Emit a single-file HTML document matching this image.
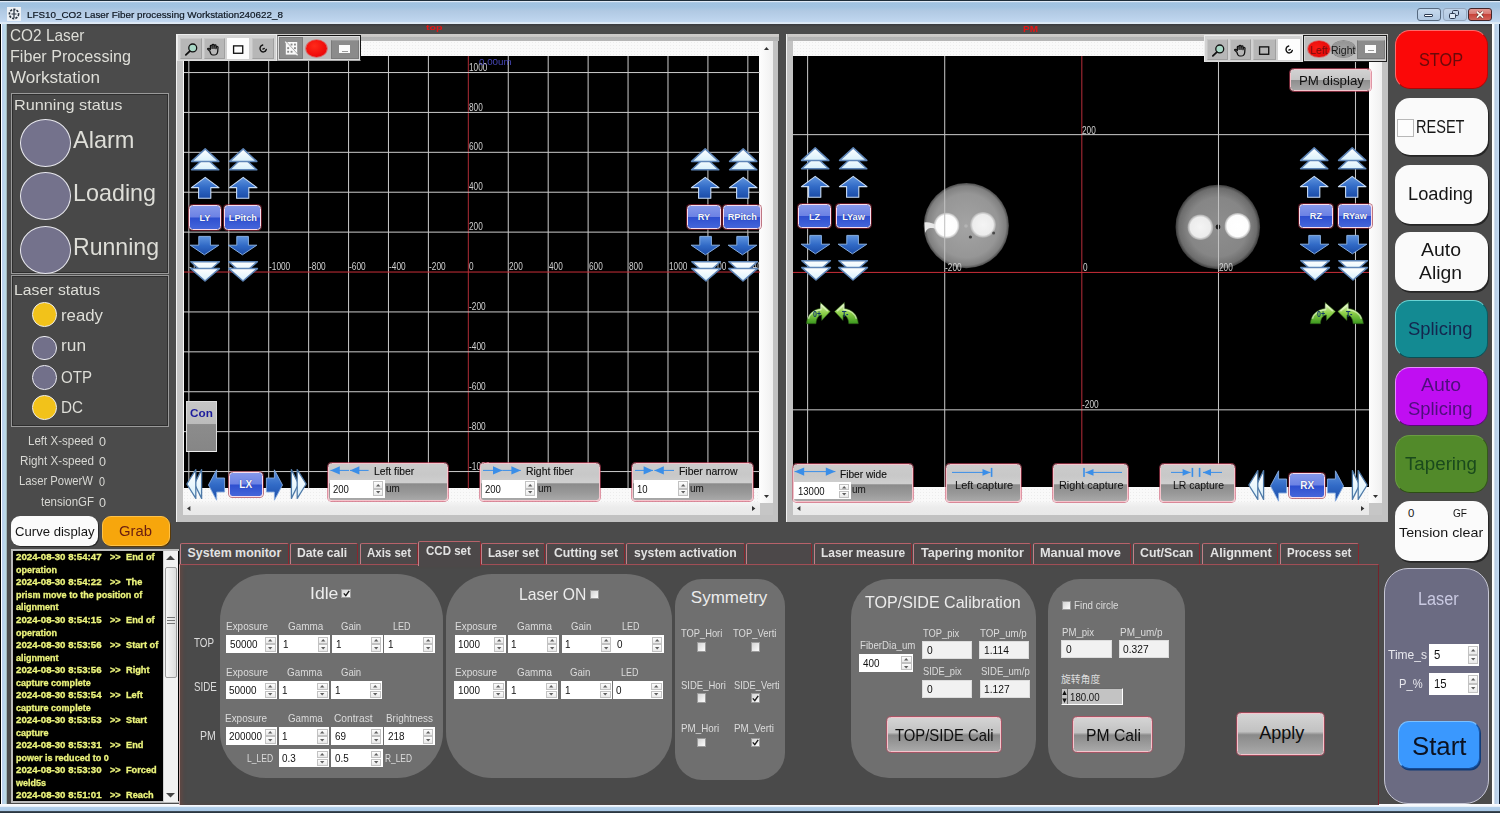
<!DOCTYPE html>
<html><head><meta charset="utf-8"><title>LFS10</title>
<style>
html,body{margin:0;padding:0;}
body{width:1500px;height:813px;overflow:hidden;position:relative;background:#4b4b4b;font-family:"Liberation Sans",sans-serif;}
.t{position:absolute;white-space:nowrap;line-height:1;}
.b{position:absolute;box-sizing:border-box;}
svg{position:absolute;overflow:visible;}

.tb{position:absolute;left:0;top:0;width:1500px;height:24px;background:linear-gradient(#dfeaf6 0,#dfeaf6 2px,#a0c2e0 2.6px,#a2c3e1 7px,#b1c9e3 11px,#bcd3ec 19px,#c3d8f0 21.6px,#dee9f5 22.6px,#e2ecf6 24px);}


.bb{position:absolute;box-sizing:border-box;border:1.5px solid #f9dcea;border-radius:3.5px;background:linear-gradient(#8598ea 0,#6c82e4 48%,#2e4fd0 52%,#4566da 100%);box-shadow:0 0 0 1px rgba(150,30,50,.6);}
.gb{position:absolute;box-sizing:border-box;border:1.2px solid #f6c4cc;border-radius:3.5px;box-shadow:0 0 0 0.9px rgba(200,70,95,.62);}
.inp{position:absolute;box-sizing:border-box;background:#fff;}
.sp{position:absolute;box-sizing:border-box;border:1px solid #c2c2c2;background:linear-gradient(#fdfdfd,#e9e9e9);}

</style></head><body>
<div class="tb"></div>
<div class="b" style="left:0.0px;top:0.0px;width:1500.0px;height:1.3px;background:#1d2c38;"></div>
<div class="b" style="left:0.0px;top:24.0px;width:7.2px;height:789.0px;background:linear-gradient(90deg,#000 0,#000 0.8px,#fff 1.1px,#fff 2.1px,#b9cfec 2.5px,#bcdbe7 5.4px,#a9c1c6 6.4px,#5a5e66 7.2px);"></div>
<div class="b" style="left:1491.7px;top:24.0px;width:8.3px;height:789.0px;background:linear-gradient(90deg,#4b4b4b 0,#fff 0.4px,#f6fbfd 2.2px,#b5c9e1 2.7px,#c3dbf3 6.6px,#0e1c30 7.4px,#0a1424 8.3px);"></div>
<div class="b" style="left:0.0px;top:804.4px;width:1500.0px;height:8.6px;background:linear-gradient(#fbfcfe 0,#f2f6fb 2.4px,#b4d0ea 3px,#a9c8e6 7px,#3e4c58 7.4px,#2a3640 8.6px);"></div>
<div class="b" style="left:7.0px;top:24.0px;width:1485.0px;height:3.0px;background:linear-gradient(#3a3a3e,#4b4b4b);"></div>
<svg style="left:7px;top:7px" width="14" height="14" viewBox="0 0 14 14"><rect x="0" y="0" width="14" height="14" fill="#eef2f6"/><circle cx="7" cy="7" r="4.6" fill="none" stroke="#2a3440" stroke-width="1.6" stroke-dasharray="2.2 1.2"/><path d="M7 3v8M4.5 7h5" stroke="#2a3440" stroke-width="1.2"/></svg>
<div class="t" style="left:27.0px;top:9.6px;font-size:9.8px;color:#0e1620;transform:scaleX(1.005);transform-origin:0 0;-webkit-text-stroke:0.2px #0e1620;">LFS10_CO2 Laser Fiber processing Workstation240622_8</div>
<div class="b" style="left:1416.5px;top:8.0px;width:24.0px;height:12.5px;border:1px solid #56697f;border-radius:3px;background:linear-gradient(#c7daee,#b0c8e2);"></div>
<div class="b" style="left:1424.0px;top:14.0px;width:9.2px;height:3.2px;border:1px solid #2d3b52;background:#fff;border-radius:1px;"></div>
<div class="b" style="left:1442.8px;top:8.0px;width:24.0px;height:12.5px;border:1px solid #93a6bd;border-radius:3px;background:linear-gradient(#c2d5ea,#b0c8e2);"></div>
<div class="b" style="left:1452.4px;top:10.2px;width:6.6px;height:5.4px;border:1.4px solid #2d3b52;border-radius:1.6px;background:#c6d8ec;"></div>
<div class="b" style="left:1449.2px;top:12.8px;width:6.6px;height:5.8px;border:1.4px solid #2d3b52;border-radius:1.6px;background:#dfeaf6;"></div>
<div class="b" style="left:1468.4px;top:8.0px;width:23.4px;height:12.5px;border:1px solid #43262b;border-radius:3px;background:linear-gradient(#e29a94 0,#d97871 45%,#c7433a 50%,#d2655b 100%);"></div>
<svg style="left:1476.2px;top:10.8px" width="8" height="7.4" viewBox="0 0 9 8" preserveAspectRatio="none"><path d="M1 0.8L8 7.2M8 0.8L1 7.2" stroke="#5a2a2a" stroke-width="3.2"/><path d="M1 0.8L8 7.2M8 0.8L1 7.2" stroke="#fff8ee" stroke-width="1.9"/></svg>
<div class="t" style="left:10.0px;top:27.3px;font-size:16.2px;color:#deded8;transform:scaleX(0.951);transform-origin:0 0;">CO2 Laser</div>
<div class="t" style="left:10.0px;top:48.1px;font-size:16.2px;color:#deded8;transform:scaleX(0.996);transform-origin:0 0;">Fiber Processing</div>
<div class="t" style="left:10.0px;top:69.1px;font-size:16.2px;color:#deded8;transform:scaleX(1.056);transform-origin:0 0;">Workstation</div>
<div class="b" style="left:11.0px;top:93.0px;width:158.0px;height:180.5px;border:1px solid #9a9a9a;background:#484848;box-shadow:inset 0 0 0 1px #2e2e2e;"></div>
<div class="t" style="left:14.0px;top:97.1px;font-size:15px;color:#deded8;transform:scaleX(1.084);transform-origin:0 0;">Running status</div>
<div class="b" style="left:19.7px;top:119.2px;width:51.0px;height:48.0px;border-radius:50%;background:#74728c;border:1.7px solid #e8e8ee;"></div>
<div class="t" style="left:72.5px;top:128.2px;font-size:24px;color:#deded8;transform:scaleX(0.981);transform-origin:0 0;">Alarm</div>
<div class="b" style="left:19.7px;top:172.0px;width:51.0px;height:48.0px;border-radius:50%;background:#74728c;border:1.7px solid #e8e8ee;"></div>
<div class="t" style="left:72.5px;top:181.4px;font-size:24px;color:#deded8;transform:scaleX(0.972);transform-origin:0 0;">Loading</div>
<div class="b" style="left:19.7px;top:226.0px;width:51.0px;height:48.0px;border-radius:50%;background:#74728c;border:1.7px solid #e8e8ee;"></div>
<div class="t" style="left:72.5px;top:234.7px;font-size:24px;color:#deded8;transform:scaleX(0.962);transform-origin:0 0;">Running</div>
<div class="b" style="left:11.0px;top:275.0px;width:158.0px;height:151.5px;border:1px solid #9a9a9a;background:#484848;box-shadow:inset 0 0 0 1px #2e2e2e;"></div>
<div class="t" style="left:14.0px;top:281.9px;font-size:15.5px;color:#deded8;transform:scaleX(1.019);transform-origin:0 0;">Laser status</div>
<div class="b" style="left:32.0px;top:302.4px;width:24.6px;height:24.6px;border-radius:50%;background:#f2c21a;border:1.9px solid #ececf0;"></div>
<div class="t" style="left:60.5px;top:306.5px;font-size:16.5px;color:#deded8;transform:scaleX(1.018);transform-origin:0 0;">ready</div>
<div class="b" style="left:32.0px;top:335.9px;width:24.6px;height:24.6px;border-radius:50%;background:#72708a;border:1.9px solid #ececf0;"></div>
<div class="t" style="left:60.5px;top:337.0px;font-size:16.5px;color:#deded8;transform:scaleX(1.048);transform-origin:0 0;">run</div>
<div class="b" style="left:32.0px;top:365.3px;width:24.6px;height:24.6px;border-radius:50%;background:#72708a;border:1.9px solid #ececf0;"></div>
<div class="t" style="left:60.5px;top:369.0px;font-size:16.5px;color:#deded8;transform:scaleX(0.914);transform-origin:0 0;">OTP</div>
<div class="b" style="left:32.0px;top:395.3px;width:24.6px;height:24.6px;border-radius:50%;background:#f2c21a;border:1.9px solid #ececf0;"></div>
<div class="t" style="left:60.5px;top:399.0px;font-size:16.5px;color:#deded8;transform:scaleX(0.923);transform-origin:0 0;">DC</div>
<div class="t" style="left:28.0px;top:434.5px;font-size:12px;color:#d8d8d4;transform:scaleX(0.963);transform-origin:0 0;">Left X-speed</div>
<div class="t" style="left:99.0px;top:435.6px;font-size:12.5px;color:#d8d8d4;transform:scaleX(1.007);transform-origin:0 0;">0</div>
<div class="t" style="left:19.5px;top:454.8px;font-size:12px;color:#d8d8d4;transform:scaleX(0.973);transform-origin:0 0;">Right X-speed</div>
<div class="t" style="left:99.0px;top:455.9px;font-size:12.5px;color:#d8d8d4;transform:scaleX(1.007);transform-origin:0 0;">0</div>
<div class="t" style="left:18.5px;top:475.3px;font-size:12px;color:#d8d8d4;transform:scaleX(0.940);transform-origin:0 0;">Laser PowerW</div>
<div class="t" style="left:99.0px;top:476.4px;font-size:12.5px;color:#d8d8d4;transform:scaleX(0.863);transform-origin:0 0;">0</div>
<div class="t" style="left:40.5px;top:495.5px;font-size:12px;color:#d8d8d4;transform:scaleX(0.957);transform-origin:0 0;">tensionGF</div>
<div class="t" style="left:99.0px;top:496.6px;font-size:12.5px;color:#d8d8d4;transform:scaleX(1.007);transform-origin:0 0;">0</div>
<div class="b" style="left:11.0px;top:516.0px;width:86.5px;height:29.5px;background:#fbfbfb;border-radius:9px;box-shadow:1px 1px 0 #2a2a2a;"></div>
<div class="t" style="left:15.0px;top:524.9px;font-size:13.5px;color:#141414;transform:scaleX(0.972);transform-origin:0 0;">Curve display</div>
<div class="b" style="left:102.0px;top:516.0px;width:67.5px;height:29.5px;background:#f7a60c;border-radius:9px;border:1px solid #ffc248;box-shadow:1px 1px 0 #5a3a08;"></div>
<div class="t" style="left:119.0px;top:522.7px;font-size:15.5px;color:#6a1e10;transform:scaleX(0.958);transform-origin:0 0;">Grab</div>
<div class="b" style="left:11.0px;top:549.0px;width:167.5px;height:253.5px;background:#000;border:2px solid #bcbcbc;border-right:0;"></div>
<div class="b" style="left:163.0px;top:550.5px;width:15.0px;height:251.5px;background:#f1f1f1;border-left:1px solid #d0d0d0;"></div>
<div class="b" style="left:164.5px;top:566.5px;width:12.5px;height:111.5px;background:linear-gradient(90deg,#f6f6f6,#dcdcdc);border:1px solid #9c9c9c;border-radius:2px;"></div>
<div class="b" style="left:167.0px;top:617.0px;width:7.5px;height:1.3px;background:#777;"></div>
<div class="b" style="left:167.0px;top:620.0px;width:7.5px;height:1.3px;background:#777;"></div>
<div class="b" style="left:167.0px;top:623.0px;width:7.5px;height:1.3px;background:#777;"></div>
<svg style="left:166px;top:555px" width="9" height="5"><path d="M0 5L4.5 0.5L9 5z" fill="#444"/></svg>
<svg style="left:166px;top:792.5px" width="9" height="5"><path d="M0 0L4.5 4.5L9 0z" fill="#444"/></svg>
<div class="t" style="left:16.0px;top:553.3px;font-size:9.3px;color:#ecf47c;font-weight:bold;transform:scaleX(1.041);transform-origin:0 0;-webkit-text-stroke:0.3px #ecf47c;">2024-08-30 8:54:47</div>
<div class="t" style="left:109.6px;top:553.3px;font-size:9.3px;color:#ecf47c;font-weight:bold;transform:scaleX(0.976);transform-origin:0 0;-webkit-text-stroke:0.3px #ecf47c;">&gt;&gt;</div>
<div class="t" style="left:126.4px;top:553.3px;font-size:9.3px;color:#ecf47c;font-weight:bold;transform:scaleX(0.990);transform-origin:0 0;-webkit-text-stroke:0.3px #ecf47c;">End of</div>
<div class="t" style="left:16.0px;top:565.9px;font-size:9.3px;color:#ecf47c;font-weight:bold;transform:scaleX(0.970);transform-origin:0 0;-webkit-text-stroke:0.3px #ecf47c;">operation</div>
<div class="t" style="left:16.0px;top:578.4px;font-size:9.3px;color:#ecf47c;font-weight:bold;transform:scaleX(1.041);transform-origin:0 0;-webkit-text-stroke:0.3px #ecf47c;">2024-08-30 8:54:22</div>
<div class="t" style="left:109.6px;top:578.4px;font-size:9.3px;color:#ecf47c;font-weight:bold;transform:scaleX(0.976);transform-origin:0 0;-webkit-text-stroke:0.3px #ecf47c;">&gt;&gt;</div>
<div class="t" style="left:126.4px;top:578.4px;font-size:9.3px;color:#ecf47c;font-weight:bold;transform:scaleX(0.990);transform-origin:0 0;-webkit-text-stroke:0.3px #ecf47c;">The</div>
<div class="t" style="left:16.0px;top:590.9px;font-size:9.3px;color:#ecf47c;font-weight:bold;transform:scaleX(0.970);transform-origin:0 0;-webkit-text-stroke:0.3px #ecf47c;">prism move to the position of</div>
<div class="t" style="left:16.0px;top:603.4px;font-size:9.3px;color:#ecf47c;font-weight:bold;transform:scaleX(0.970);transform-origin:0 0;-webkit-text-stroke:0.3px #ecf47c;">alignment</div>
<div class="t" style="left:16.0px;top:616.0px;font-size:9.3px;color:#ecf47c;font-weight:bold;transform:scaleX(1.041);transform-origin:0 0;-webkit-text-stroke:0.3px #ecf47c;">2024-08-30 8:54:15</div>
<div class="t" style="left:109.6px;top:616.0px;font-size:9.3px;color:#ecf47c;font-weight:bold;transform:scaleX(0.976);transform-origin:0 0;-webkit-text-stroke:0.3px #ecf47c;">&gt;&gt;</div>
<div class="t" style="left:126.4px;top:616.0px;font-size:9.3px;color:#ecf47c;font-weight:bold;transform:scaleX(0.990);transform-origin:0 0;-webkit-text-stroke:0.3px #ecf47c;">End of</div>
<div class="t" style="left:16.0px;top:628.5px;font-size:9.3px;color:#ecf47c;font-weight:bold;transform:scaleX(0.970);transform-origin:0 0;-webkit-text-stroke:0.3px #ecf47c;">operation</div>
<div class="t" style="left:16.0px;top:641.0px;font-size:9.3px;color:#ecf47c;font-weight:bold;transform:scaleX(1.041);transform-origin:0 0;-webkit-text-stroke:0.3px #ecf47c;">2024-08-30 8:53:56</div>
<div class="t" style="left:109.6px;top:641.0px;font-size:9.3px;color:#ecf47c;font-weight:bold;transform:scaleX(0.976);transform-origin:0 0;-webkit-text-stroke:0.3px #ecf47c;">&gt;&gt;</div>
<div class="t" style="left:126.4px;top:641.0px;font-size:9.3px;color:#ecf47c;font-weight:bold;transform:scaleX(0.990);transform-origin:0 0;-webkit-text-stroke:0.3px #ecf47c;">Start of</div>
<div class="t" style="left:16.0px;top:653.6px;font-size:9.3px;color:#ecf47c;font-weight:bold;transform:scaleX(0.970);transform-origin:0 0;-webkit-text-stroke:0.3px #ecf47c;">alignment</div>
<div class="t" style="left:16.0px;top:666.1px;font-size:9.3px;color:#ecf47c;font-weight:bold;transform:scaleX(1.041);transform-origin:0 0;-webkit-text-stroke:0.3px #ecf47c;">2024-08-30 8:53:56</div>
<div class="t" style="left:109.6px;top:666.1px;font-size:9.3px;color:#ecf47c;font-weight:bold;transform:scaleX(0.976);transform-origin:0 0;-webkit-text-stroke:0.3px #ecf47c;">&gt;&gt;</div>
<div class="t" style="left:126.4px;top:666.1px;font-size:9.3px;color:#ecf47c;font-weight:bold;transform:scaleX(0.990);transform-origin:0 0;-webkit-text-stroke:0.3px #ecf47c;">Right</div>
<div class="t" style="left:16.0px;top:678.6px;font-size:9.3px;color:#ecf47c;font-weight:bold;transform:scaleX(0.970);transform-origin:0 0;-webkit-text-stroke:0.3px #ecf47c;">capture complete</div>
<div class="t" style="left:16.0px;top:691.2px;font-size:9.3px;color:#ecf47c;font-weight:bold;transform:scaleX(1.041);transform-origin:0 0;-webkit-text-stroke:0.3px #ecf47c;">2024-08-30 8:53:54</div>
<div class="t" style="left:109.6px;top:691.2px;font-size:9.3px;color:#ecf47c;font-weight:bold;transform:scaleX(0.976);transform-origin:0 0;-webkit-text-stroke:0.3px #ecf47c;">&gt;&gt;</div>
<div class="t" style="left:126.4px;top:691.2px;font-size:9.3px;color:#ecf47c;font-weight:bold;transform:scaleX(0.990);transform-origin:0 0;-webkit-text-stroke:0.3px #ecf47c;">Left</div>
<div class="t" style="left:16.0px;top:703.7px;font-size:9.3px;color:#ecf47c;font-weight:bold;transform:scaleX(0.970);transform-origin:0 0;-webkit-text-stroke:0.3px #ecf47c;">capture complete</div>
<div class="t" style="left:16.0px;top:716.2px;font-size:9.3px;color:#ecf47c;font-weight:bold;transform:scaleX(1.041);transform-origin:0 0;-webkit-text-stroke:0.3px #ecf47c;">2024-08-30 8:53:53</div>
<div class="t" style="left:109.6px;top:716.2px;font-size:9.3px;color:#ecf47c;font-weight:bold;transform:scaleX(0.976);transform-origin:0 0;-webkit-text-stroke:0.3px #ecf47c;">&gt;&gt;</div>
<div class="t" style="left:126.4px;top:716.2px;font-size:9.3px;color:#ecf47c;font-weight:bold;transform:scaleX(0.990);transform-origin:0 0;-webkit-text-stroke:0.3px #ecf47c;">Start</div>
<div class="t" style="left:16.0px;top:728.7px;font-size:9.3px;color:#ecf47c;font-weight:bold;transform:scaleX(0.970);transform-origin:0 0;-webkit-text-stroke:0.3px #ecf47c;">capture</div>
<div class="t" style="left:16.0px;top:741.3px;font-size:9.3px;color:#ecf47c;font-weight:bold;transform:scaleX(1.041);transform-origin:0 0;-webkit-text-stroke:0.3px #ecf47c;">2024-08-30 8:53:31</div>
<div class="t" style="left:109.6px;top:741.3px;font-size:9.3px;color:#ecf47c;font-weight:bold;transform:scaleX(0.976);transform-origin:0 0;-webkit-text-stroke:0.3px #ecf47c;">&gt;&gt;</div>
<div class="t" style="left:126.4px;top:741.3px;font-size:9.3px;color:#ecf47c;font-weight:bold;transform:scaleX(0.990);transform-origin:0 0;-webkit-text-stroke:0.3px #ecf47c;">End</div>
<div class="t" style="left:16.0px;top:753.8px;font-size:9.3px;color:#ecf47c;font-weight:bold;transform:scaleX(0.970);transform-origin:0 0;-webkit-text-stroke:0.3px #ecf47c;">power is reduced to 0</div>
<div class="t" style="left:16.0px;top:766.3px;font-size:9.3px;color:#ecf47c;font-weight:bold;transform:scaleX(1.041);transform-origin:0 0;-webkit-text-stroke:0.3px #ecf47c;">2024-08-30 8:53:30</div>
<div class="t" style="left:109.6px;top:766.3px;font-size:9.3px;color:#ecf47c;font-weight:bold;transform:scaleX(0.976);transform-origin:0 0;-webkit-text-stroke:0.3px #ecf47c;">&gt;&gt;</div>
<div class="t" style="left:126.4px;top:766.3px;font-size:9.3px;color:#ecf47c;font-weight:bold;transform:scaleX(0.990);transform-origin:0 0;-webkit-text-stroke:0.3px #ecf47c;">Forced</div>
<div class="t" style="left:16.0px;top:778.9px;font-size:9.3px;color:#ecf47c;font-weight:bold;transform:scaleX(0.970);transform-origin:0 0;-webkit-text-stroke:0.3px #ecf47c;">weld5s</div>
<div class="t" style="left:16.0px;top:791.4px;font-size:9.3px;color:#ecf47c;font-weight:bold;transform:scaleX(1.041);transform-origin:0 0;-webkit-text-stroke:0.3px #ecf47c;">2024-08-30 8:51:01</div>
<div class="t" style="left:109.6px;top:791.4px;font-size:9.3px;color:#ecf47c;font-weight:bold;transform:scaleX(0.976);transform-origin:0 0;-webkit-text-stroke:0.3px #ecf47c;">&gt;&gt;</div>
<div class="t" style="left:126.4px;top:791.4px;font-size:9.3px;color:#ecf47c;font-weight:bold;transform:scaleX(0.990);transform-origin:0 0;-webkit-text-stroke:0.3px #ecf47c;">Reach</div>
<svg width="0" height="0" style="left:0;top:0"><defs>
<linearGradient id="gb" x1="0" y1="0" x2="0" y2="1"><stop offset="0" stop-color="#5f94de"/><stop offset="0.5" stop-color="#316ac6"/><stop offset="1" stop-color="#1b4ca8"/></linearGradient>
<linearGradient id="gbh" x1="0" y1="0" x2="1" y2="0"><stop offset="0" stop-color="#6fa2e6"/><stop offset="0.5" stop-color="#3a78d0"/><stop offset="1" stop-color="#1e56b4"/></linearGradient>
<linearGradient id="gw" x1="0" y1="0" x2="0" y2="1"><stop offset="0" stop-color="#ffffff"/><stop offset="1" stop-color="#d8f0fb"/></linearGradient>
<linearGradient id="gg" x1="0" y1="0" x2="0" y2="1"><stop offset="0" stop-color="#e2f6c0"/><stop offset="0.5" stop-color="#8fd04a"/><stop offset="1" stop-color="#3a981e"/></linearGradient>
<g id="aup"><path d="M14.2 1.4 L28 11.6 L19.8 11.6 L19.8 22.2 L7.6 22.2 L7.6 11.6 L0.4 11.6 Z" fill="url(#gb)" stroke="#c9ddf6" stroke-width="1.1" stroke-linejoin="round"/></g>
<g id="adn"><path d="M8.8 0.4 L20.4 0.4 L20.4 9.2 L28.8 9.2 L14.4 18.8 L0.2 9.2 L8.8 9.2 Z" fill="url(#gb)" stroke="#87aee0" stroke-width="1" stroke-linejoin="round"/></g>
<g id="dup"><path d="M14.2 9.3 L27.8 21.8 L0.6 21.8 Z" fill="url(#gw)" stroke="#5f86b8" stroke-width="1.5" stroke-linejoin="round"/><path d="M14.2 0.9 L27.8 13.4 L0.6 13.4 Z" fill="url(#gw)" stroke="#5f86b8" stroke-width="1.5" stroke-linejoin="round"/></g>
<g id="ddn"><path d="M0.8 0.8 L29.4 0.8 L15 13.2 Z" fill="url(#gw)" stroke="#5f86b8" stroke-width="1.5" stroke-linejoin="round"/><path d="M0.8 7.6 L29.4 7.6 L15 20 Z" fill="url(#gw)" stroke="#5f86b8" stroke-width="1.5" stroke-linejoin="round"/></g>
<g id="alt"><path d="M0.5 16 L8.6 0.8 L8.6 9 L16.6 9 L16.6 23 L8.6 23 L8.6 31.2 Z" fill="url(#gb)" stroke="#86aade" stroke-width="0.9" stroke-linejoin="round"/></g>
<g id="art"><path d="M16.5 16 L8.4 0.8 L8.4 9 L0.4 9 L0.4 23 L8.4 23 L8.4 31.2 Z" fill="url(#gb)" stroke="#86aade" stroke-width="0.9" stroke-linejoin="round"/></g>
<g id="dlt"><path d="M8.5 16 L15.6 1.6 L15.6 30.4 Z" fill="url(#gw)" stroke="#4f7aa8" stroke-width="1.3" stroke-linejoin="round"/><path d="M0.8 16 L9.8 1.6 L9.8 30.4 Z" fill="url(#gw)" stroke="#4f7aa8" stroke-width="1.3" stroke-linejoin="round"/></g>
<g id="drt"><path d="M9.5 16 L2.4 1.6 L2.4 30.4 Z" fill="url(#gw)" stroke="#4f7aa8" stroke-width="1.3" stroke-linejoin="round"/><path d="M17.2 16 L8.2 1.6 L8.2 30.4 Z" fill="url(#gw)" stroke="#4f7aa8" stroke-width="1.3" stroke-linejoin="round"/></g>
</defs></svg>
<div class="b" style="left:176.4px;top:34.0px;width:602.1px;height:487.5px;background:#c2c2c2;border-left:1.6px solid #f2f2f2;"></div>
<div class="b" style="left:178.0px;top:34.0px;width:600.5px;height:7.0px;background:linear-gradient(#cfcdcb 0,#c8c6c4 2.6px,#b2b2b2 3.2px,#b6b6b6 7px);"></div>
<div class="b" style="left:183.0px;top:40.6px;width:589.5px;height:474.5px;background-color:#f9f9f9;background-image:radial-gradient(#ececec 0.6px,transparent 0.9px);background-size:3px 3px;"></div>
<div class="b" style="left:183.7px;top:55.5px;width:575.8px;height:432.5px;background:#000;"></div>
<div class="b" style="left:759.5px;top:40.6px;width:13.0px;height:462.5px;background:linear-gradient(90deg,#fdfdfd,#f0f0f0);"></div>
<div class="b" style="left:183.0px;top:501.5px;width:576.5px;height:13.6px;background:linear-gradient(#f4f4f4,#ececec 40%,#e9e9e9);"></div>
<div class="b" style="left:759.5px;top:503.1px;width:13.0px;height:12.0px;background:#c6c6c6;"></div>
<svg style="left:763.5px;top:46.5px" width="5" height="3"><path d="M0 3L2.5 0L5 3z" fill="#333"/></svg>
<svg style="left:763.5px;top:495.0px" width="5" height="3"><path d="M0 0L2.5 3L5 0z" fill="#333"/></svg>
<svg style="left:187.0px;top:505.7px" width="3.4" height="5"><path d="M3.4 0L0 2.5L3.4 5z" fill="#333"/></svg>
<svg style="left:751.5px;top:505.7px" width="3.4" height="5"><path d="M0 0L3.4 2.5L0 5z" fill="#333"/></svg>
<svg style="left:183.7px;top:55.5px" width="575.8" height="432.5" viewBox="183.7 55.5 575.8 432.5"><rect x="188.00" y="55.5" width="1.05" height="432.5" fill="#c2c2c2"/><rect x="227.93" y="55.5" width="1.05" height="432.5" fill="#c2c2c2"/><rect x="267.86" y="55.5" width="1.05" height="432.5" fill="#c2c2c2"/><rect x="307.79" y="55.5" width="1.05" height="432.5" fill="#c2c2c2"/><rect x="347.72" y="55.5" width="1.05" height="432.5" fill="#c2c2c2"/><rect x="387.65" y="55.5" width="1.05" height="432.5" fill="#c2c2c2"/><rect x="427.58" y="55.5" width="1.05" height="432.5" fill="#c2c2c2"/><rect x="467.51" y="55.5" width="1.05" height="432.5" fill="#a62a34"/><rect x="507.44" y="55.5" width="1.05" height="432.5" fill="#c2c2c2"/><rect x="547.37" y="55.5" width="1.05" height="432.5" fill="#c2c2c2"/><rect x="587.30" y="55.5" width="1.05" height="432.5" fill="#c2c2c2"/><rect x="627.23" y="55.5" width="1.05" height="432.5" fill="#c2c2c2"/><rect x="667.16" y="55.5" width="1.05" height="432.5" fill="#c2c2c2"/><rect x="707.09" y="55.5" width="1.05" height="432.5" fill="#c2c2c2"/><rect x="747.02" y="55.5" width="1.05" height="432.5" fill="#c2c2c2"/><rect x="183.7" y="71.50" width="575.8" height="1.05" fill="#c2c2c2"/><rect x="183.7" y="111.40" width="575.8" height="1.05" fill="#c2c2c2"/><rect x="183.7" y="151.30" width="575.8" height="1.05" fill="#c2c2c2"/><rect x="183.7" y="191.20" width="575.8" height="1.05" fill="#c2c2c2"/><rect x="183.7" y="231.10" width="575.8" height="1.05" fill="#c2c2c2"/><rect x="183.7" y="271.00" width="575.8" height="1.05" fill="#c02c36"/><rect x="183.7" y="310.90" width="575.8" height="1.05" fill="#c2c2c2"/><rect x="183.7" y="350.80" width="575.8" height="1.05" fill="#c2c2c2"/><rect x="183.7" y="390.70" width="575.8" height="1.05" fill="#c2c2c2"/><rect x="183.7" y="430.60" width="575.8" height="1.05" fill="#c2c2c2"/><rect x="183.7" y="470.50" width="575.8" height="1.05" fill="#c2c2c2"/></svg>
<div class="b" style="left:183.7px;top:55.5px;width:575.8px;height:432.5px;overflow:hidden;">
<div class="t" style="left:285.2px;top:7.1px;font-size:10px;color:#d0d0d0;transform:scaleX(0.824);transform-origin:0 0;">1000</div>
<div class="t" style="left:285.2px;top:47.0px;font-size:10px;color:#d0d0d0;transform:scaleX(0.824);transform-origin:0 0;">800</div>
<div class="t" style="left:285.2px;top:86.9px;font-size:10px;color:#d0d0d0;transform:scaleX(0.824);transform-origin:0 0;">600</div>
<div class="t" style="left:285.2px;top:126.8px;font-size:10px;color:#d0d0d0;transform:scaleX(0.824);transform-origin:0 0;">400</div>
<div class="t" style="left:285.2px;top:166.7px;font-size:10px;color:#d0d0d0;transform:scaleX(0.824);transform-origin:0 0;">200</div>
<div class="t" style="left:285.2px;top:246.5px;font-size:10px;color:#d0d0d0;transform:scaleX(0.831);transform-origin:0 0;">-200</div>
<div class="t" style="left:285.2px;top:286.4px;font-size:10px;color:#d0d0d0;transform:scaleX(0.831);transform-origin:0 0;">-400</div>
<div class="t" style="left:285.2px;top:326.3px;font-size:10px;color:#d0d0d0;transform:scaleX(0.831);transform-origin:0 0;">-600</div>
<div class="t" style="left:285.2px;top:366.2px;font-size:10px;color:#d0d0d0;transform:scaleX(0.831);transform-origin:0 0;">-800</div>
<div class="t" style="left:285.2px;top:406.1px;font-size:10px;color:#d0d0d0;transform:scaleX(0.830);transform-origin:0 0;">-1000</div>
<div class="t" style="left:5.7px;top:206.8px;font-size:10px;color:#d0d0d0;transform:scaleX(0.830);transform-origin:0 0;">-1400</div>
<div class="t" style="left:45.6px;top:206.8px;font-size:10px;color:#d0d0d0;transform:scaleX(0.830);transform-origin:0 0;">-1200</div>
<div class="t" style="left:85.6px;top:206.8px;font-size:10px;color:#d0d0d0;transform:scaleX(0.830);transform-origin:0 0;">-1000</div>
<div class="t" style="left:125.5px;top:206.8px;font-size:10px;color:#d0d0d0;transform:scaleX(0.831);transform-origin:0 0;">-800</div>
<div class="t" style="left:165.4px;top:206.8px;font-size:10px;color:#d0d0d0;transform:scaleX(0.831);transform-origin:0 0;">-600</div>
<div class="t" style="left:205.3px;top:206.8px;font-size:10px;color:#d0d0d0;transform:scaleX(0.831);transform-origin:0 0;">-400</div>
<div class="t" style="left:245.3px;top:206.8px;font-size:10px;color:#d0d0d0;transform:scaleX(0.831);transform-origin:0 0;">-200</div>
<div class="t" style="left:285.2px;top:206.8px;font-size:10px;color:#d0d0d0;transform:scaleX(0.824);transform-origin:0 0;">0</div>
<div class="t" style="left:325.1px;top:206.8px;font-size:10px;color:#d0d0d0;transform:scaleX(0.824);transform-origin:0 0;">200</div>
<div class="t" style="left:365.1px;top:206.8px;font-size:10px;color:#d0d0d0;transform:scaleX(0.824);transform-origin:0 0;">400</div>
<div class="t" style="left:405.0px;top:206.8px;font-size:10px;color:#d0d0d0;transform:scaleX(0.824);transform-origin:0 0;">600</div>
<div class="t" style="left:444.9px;top:206.8px;font-size:10px;color:#d0d0d0;transform:scaleX(0.824);transform-origin:0 0;">800</div>
<div class="t" style="left:484.9px;top:206.8px;font-size:10px;color:#d0d0d0;transform:scaleX(0.824);transform-origin:0 0;">1000</div>
<div class="t" style="left:524.8px;top:206.8px;font-size:10px;color:#d0d0d0;transform:scaleX(0.824);transform-origin:0 0;">1200</div>
<div class="t" style="left:564.7px;top:206.8px;font-size:10px;color:#d0d0d0;transform:scaleX(0.824);transform-origin:0 0;">1400</div>
</div>
<div class="t" style="left:478.8px;top:56.7px;font-size:9.6px;color:#4646b4;transform:scaleX(1.021);transform-origin:0 0;">0.00um</div>
<div class="t" style="left:426.0px;top:23.7px;font-size:8px;color:#e61414;font-weight:bold;transform:scaleX(1.335);transform-origin:0 0;">top</div>
<div class="b" style="left:177.0px;top:34.2px;width:99.5px;height:27.0px;background:#d2d2d2;border:1px solid #ececec;border-bottom-color:#dcdcdc;"></div>
<div class="b" style="left:180.0px;top:37.7px;width:22.0px;height:21.0px;background:#b7b7b7;border:1px solid #a0a0a0;border-top-color:#c6c6c6;border-left-color:#c4c4c4;"></div>
<svg style="left:180.0px;top:38.2px" width="22" height="20" viewBox="0 0 22 20"><g transform="translate(1.9,2.9) scale(0.86)"><circle cx="12.6" cy="8.2" r="4.6" fill="#a8d8c6" stroke="#111" stroke-width="1.5"/><path d="M9.2 11.8L4.6 16.2" stroke="#111" stroke-width="2.1" stroke-linecap="round"/></g></svg>
<div class="b" style="left:203.5px;top:37.7px;width:21.3px;height:21.0px;background:#b7b7b7;border:1px solid #a0a0a0;border-top-color:#c6c6c6;border-left-color:#c4c4c4;"></div>
<svg style="left:203.2px;top:38.2px" width="22" height="20" viewBox="0 0 22 20"><g transform="translate(-0.4,3.0) scale(1.02,0.9)"><path d="M7.2 11.6 L5.2 9.4 C4.4 8.6 5.4 7.6 6.3 8.3 L7.6 9.5 L7.6 5.6 C7.6 4.5 9.1 4.5 9.2 5.6 L9.3 8.2 L9.4 4.6 C9.5 3.5 11 3.5 11.1 4.6 L11.2 8.2 L11.5 5 C11.6 4 13.1 4 13.1 5.1 L13.1 8.6 L13.6 6.6 C13.9 5.7 15.2 5.9 15.1 7 L14.8 11.6 C14.6 14.2 13.4 15.6 11.2 15.6 L10 15.6 C8.6 15.6 7.8 14.6 7.2 11.6 Z" fill="none" stroke="#111" stroke-width="1.25" stroke-linejoin="round"/></g></svg>
<div class="b" style="left:227.0px;top:37.7px;width:22.3px;height:21.0px;background:#fdfdfd;"></div>
<svg style="left:227.2px;top:38.2px" width="22" height="20" viewBox="0 0 22 20"><g transform="translate(1.3,2.6) scale(0.88)"><rect x="6" y="6" width="10.4" height="8.4" fill="none" stroke="#111" stroke-width="1.5"/></g></svg>
<div class="b" style="left:251.5px;top:37.7px;width:22.5px;height:21.0px;background:#b7b7b7;border:1px solid #a0a0a0;border-top-color:#c6c6c6;border-left-color:#c4c4c4;"></div>
<svg style="left:251.8px;top:38.2px" width="22" height="20" viewBox="0 0 22 20"><g transform="translate(0.6,2.2) scale(0.9)"><path d="M11.2 5.4 C8.4 6 7.4 9.4 9 11.6 C10.6 13.8 14.4 13.4 15.2 10.4" fill="none" stroke="#111" stroke-width="1.6" stroke-linecap="round"/><path d="M11.4 9.8 L13 9.2" stroke="#111" stroke-width="1.5" stroke-linecap="round"/></g></svg>
<div class="b" style="left:276.6px;top:34.6px;width:84.8px;height:26.6px;background:#bcbcbc;border:1px solid #141414;border-left-color:#8a8a8a;border-bottom-color:#a8a8a8;box-shadow:inset 0 0 0 1px #dedede;"></div>
<div class="b" style="left:279.0px;top:37.0px;width:23.8px;height:22.2px;background:#8c8c8c;border:1px solid #7c7c7c;"></div>
<svg style="left:285px;top:40.6px" width="13" height="15" viewBox="0 0 13 15"><rect x="0.8" y="1" width="11.4" height="12.6" fill="#fafafa"/><g fill="#8a8a8a"><rect x="5.6" y="2.6" width="1.9" height="1.9"/><rect x="9" y="2.6" width="1.9" height="1.9"/><rect x="2.2" y="6.2" width="1.9" height="1.9"/><rect x="9" y="6.2" width="1.9" height="1.9"/><rect x="2.2" y="9.8" width="1.9" height="1.9"/><rect x="5.6" y="9.8" width="1.9" height="1.9"/></g><path d="M0.2 0.6L12.6 14.2" stroke="#f4f4f4" stroke-width="1.3"/><path d="M1.2 0.4L13 13.4" stroke="#8a8a8a" stroke-width="0.7"/></svg>
<div class="b" style="left:306.0px;top:40.2px;width:21.0px;height:17.2px;background:radial-gradient(ellipse at 40% 35%,#ff2a1a,#ee0808 70%);border-radius:50%;box-shadow:0 0 0 0.8px #d86a6a;"></div>
<div class="b" style="left:331.0px;top:40.0px;width:27.8px;height:18.8px;background:#8b8b8b;border:1px solid #7a7a7a;border-top-color:#9c9c9c;"></div>
<div class="b" style="left:339.0px;top:45.0px;width:11.2px;height:8.0px;background:#fbfbfb;"></div>
<div class="b" style="left:342.0px;top:50.6px;width:5.5px;height:1.0px;background:#9a9a9a;"></div>
<svg style="left:190.5px;top:147.7px" width="30" height="34"><use href="#dup"/></svg>
<svg style="left:190.5px;top:176.4px" width="30" height="34"><use href="#aup"/></svg>
<svg style="left:190.4px;top:236.2px" width="30" height="34"><use href="#adn"/></svg>
<svg style="left:190.3px;top:260.6px" width="30" height="34"><use href="#ddn"/></svg>
<svg style="left:228.5px;top:147.7px" width="30" height="34"><use href="#dup"/></svg>
<svg style="left:228.5px;top:176.4px" width="30" height="34"><use href="#aup"/></svg>
<svg style="left:228.4px;top:236.2px" width="30" height="34"><use href="#adn"/></svg>
<svg style="left:228.3px;top:260.6px" width="30" height="34"><use href="#ddn"/></svg>
<svg style="left:691.3px;top:147.7px" width="30" height="34"><use href="#dup"/></svg>
<svg style="left:691.3px;top:176.4px" width="30" height="34"><use href="#aup"/></svg>
<svg style="left:691.2px;top:236.2px" width="30" height="34"><use href="#adn"/></svg>
<svg style="left:691.1px;top:260.6px" width="30" height="34"><use href="#ddn"/></svg>
<svg style="left:728.5px;top:147.7px" width="30" height="34"><use href="#dup"/></svg>
<svg style="left:728.5px;top:176.4px" width="30" height="34"><use href="#aup"/></svg>
<svg style="left:728.4px;top:236.2px" width="30" height="34"><use href="#adn"/></svg>
<svg style="left:728.3px;top:260.6px" width="30" height="34"><use href="#ddn"/></svg>
<div class="bb" style="left:188.6px;top:205.0px;width:32.6px;height:25.0px;"></div>
<div class="t" style="left:199.4px;top:213.9px;font-size:9.2px;color:#f6f8ff;font-weight:bold;text-shadow:0 0 1px #203080;">LY</div>
<div class="bb" style="left:224.4px;top:205.0px;width:37.0px;height:25.0px;"></div>
<div class="t" style="left:228.8px;top:213.9px;font-size:9.2px;color:#f6f8ff;font-weight:bold;text-shadow:0 0 1px #203080;">LPitch</div>
<div class="bb" style="left:687.0px;top:204.6px;width:34.0px;height:24.4px;"></div>
<div class="t" style="left:697.8px;top:213.2px;font-size:9.2px;color:#f6f8ff;font-weight:bold;text-shadow:0 0 1px #203080;">RY</div>
<div class="bb" style="left:723.4px;top:204.6px;width:37.8px;height:24.4px;"></div>
<div class="t" style="left:727.7px;top:213.2px;font-size:9.2px;color:#f6f8ff;font-weight:bold;text-shadow:0 0 1px #203080;">RPitch</div>
<div class="b" style="left:185.8px;top:401.2px;width:31.0px;height:50.8px;background:linear-gradient(#c6c6c6 0,#bcbcbc 44%,#8c8c8c 46%,#868686 100%);border:1px solid #dcdcdc;border-bottom-color:#eee;"></div>
<div class="t" style="left:189.6px;top:407.8px;font-size:10.6px;color:#1c1c9c;font-weight:bold;transform:scaleX(1.107);transform-origin:0 0;">Con</div>
<svg style="left:186.2px;top:468.4px" width="18" height="32"><use href="#dlt"/></svg>
<svg style="left:207.6px;top:468.6px" width="18" height="32"><use href="#alt"/></svg>
<div class="bb" style="left:228.6px;top:472.0px;width:34.2px;height:24.6px;"></div>
<div class="t" style="left:239.3px;top:480.0px;font-size:10px;color:#f6f8ff;font-weight:bold;text-shadow:0 0 1px #203080;">LX</div>
<svg style="left:265.6px;top:468.6px" width="18" height="32"><use href="#art"/></svg>
<svg style="left:289.0px;top:468.4px" width="18" height="32"><use href="#drt"/></svg>
<div class="gb" style="left:328.0px;top:463.0px;width:120.2px;height:38.2px;background:linear-gradient(#cbcbcb 0,#c8c8c8 30%,#cfcfcf 52%,#8b8b8b 55%,#999 80%,#a9a9a9 100%);"></div>
<svg style="left:0;top:0" width="1500" height="813"><rect x="330.4" y="469.9" width="18.6" height="1" fill="#3a8ee8"/><path d="M330.4 470.4L339.8 466.3L339.8 474.5z" fill="#3a8ee8"/><rect x="350.0" y="469.9" width="18.6" height="1" fill="#3a8ee8"/><path d="M350.0 470.4L359.4 466.3L359.4 474.5z" fill="#3a8ee8"/></svg>
<div class="t" style="left:374.4px;top:466.4px;font-size:11.4px;color:#111;transform:scaleX(0.904);transform-origin:0 0;-webkit-text-stroke:0.15px #111;">Left fiber</div>
<div class="inp" style="left:329.5px;top:479.9px;width:55.4px;height:17.7px;background:#fff;"></div>
<div class="t" style="left:333.0px;top:483.6px;font-size:10.6px;color:#101010;transform:scaleX(0.900);transform-origin:0 0;">200</div>
<div class="sp" style="left:373.4px;top:481.4px;width:10.0px;height:7.2px;"></div>
<div class="sp" style="left:373.4px;top:488.9px;width:10.0px;height:7.1px;"></div>
<svg style="left:376.2px;top:483.9px" width="4.4" height="2.6"><path d="M0 2.6L2.2 0L4.4 2.6z" fill="#5e5e5e"/></svg>
<svg style="left:376.2px;top:491.2px" width="4.4" height="2.6"><path d="M0 0L2.2 2.6L4.4 0z" fill="#5e5e5e"/></svg>
<div class="t" style="left:386.0px;top:483.0px;font-size:11px;color:#111;transform:scaleX(0.903);transform-origin:0 0;">um</div>
<div class="gb" style="left:480.0px;top:463.0px;width:120.2px;height:38.2px;background:linear-gradient(#cbcbcb 0,#c8c8c8 30%,#cfcfcf 52%,#8b8b8b 55%,#999 80%,#a9a9a9 100%);"></div>
<svg style="left:0;top:0" width="1500" height="813"><rect x="483.0" y="469.9" width="19.4" height="1" fill="#3a8ee8"/><path d="M502.4 470.4L493.0 466.3L493.0 474.5z" fill="#3a8ee8"/><rect x="502.4" y="469.9" width="18.4" height="1" fill="#3a8ee8"/><path d="M520.8 470.4L511.4 466.3L511.4 474.5z" fill="#3a8ee8"/></svg>
<div class="t" style="left:526.4px;top:466.4px;font-size:11.4px;color:#111;transform:scaleX(0.916);transform-origin:0 0;-webkit-text-stroke:0.15px #111;">Right fiber</div>
<div class="inp" style="left:481.5px;top:479.9px;width:55.4px;height:17.7px;background:#fff;"></div>
<div class="t" style="left:485.0px;top:483.6px;font-size:10.6px;color:#101010;transform:scaleX(0.900);transform-origin:0 0;">200</div>
<div class="sp" style="left:525.4px;top:481.4px;width:10.0px;height:7.2px;"></div>
<div class="sp" style="left:525.4px;top:488.9px;width:10.0px;height:7.1px;"></div>
<svg style="left:528.2px;top:483.9px" width="4.4" height="2.6"><path d="M0 2.6L2.2 0L4.4 2.6z" fill="#5e5e5e"/></svg>
<svg style="left:528.2px;top:491.2px" width="4.4" height="2.6"><path d="M0 0L2.2 2.6L4.4 0z" fill="#5e5e5e"/></svg>
<div class="t" style="left:538.0px;top:483.0px;font-size:11px;color:#111;transform:scaleX(0.903);transform-origin:0 0;">um</div>
<div class="gb" style="left:632.4px;top:463.0px;width:120.4px;height:38.2px;background:linear-gradient(#cbcbcb 0,#c8c8c8 30%,#cfcfcf 52%,#8b8b8b 55%,#999 80%,#a9a9a9 100%);"></div>
<svg style="left:0;top:0" width="1500" height="813"><rect x="635.0" y="469.9" width="18.0" height="1" fill="#3a8ee8"/><path d="M653.0 470.4L643.6 466.3L643.6 474.5z" fill="#3a8ee8"/><rect x="654.4" y="469.9" width="19.6" height="1" fill="#3a8ee8"/><path d="M654.4 470.4L663.8 466.3L663.8 474.5z" fill="#3a8ee8"/></svg>
<div class="t" style="left:679.4px;top:466.4px;font-size:11.4px;color:#111;transform:scaleX(0.916);transform-origin:0 0;-webkit-text-stroke:0.15px #111;">Fiber narrow</div>
<div class="inp" style="left:633.9px;top:479.9px;width:55.4px;height:17.7px;background:#fff;"></div>
<div class="t" style="left:637.4px;top:483.6px;font-size:10.6px;color:#101010;transform:scaleX(0.900);transform-origin:0 0;">10</div>
<div class="sp" style="left:677.8px;top:481.4px;width:10.0px;height:7.2px;"></div>
<div class="sp" style="left:677.8px;top:488.9px;width:10.0px;height:7.1px;"></div>
<svg style="left:680.6px;top:483.9px" width="4.4" height="2.6"><path d="M0 2.6L2.2 0L4.4 2.6z" fill="#5e5e5e"/></svg>
<svg style="left:680.6px;top:491.2px" width="4.4" height="2.6"><path d="M0 0L2.2 2.6L4.4 0z" fill="#5e5e5e"/></svg>
<div class="t" style="left:690.4px;top:483.0px;font-size:11px;color:#111;transform:scaleX(0.903);transform-origin:0 0;">um</div>
<div class="b" style="left:786.2px;top:34.0px;width:601.4px;height:487.5px;background:#c2c2c2;border-left:1.6px solid #f2f2f2;"></div>
<div class="b" style="left:787.8px;top:34.0px;width:599.8px;height:7.0px;background:linear-gradient(#cfcdcb 0,#c8c6c4 2.6px,#b2b2b2 3.2px,#b6b6b6 7px);"></div>
<div class="b" style="left:792.8px;top:40.6px;width:588.8px;height:474.5px;background-color:#f9f9f9;background-image:radial-gradient(#ececec 0.6px,transparent 0.9px);background-size:3px 3px;"></div>
<div class="b" style="left:793.0px;top:56.0px;width:576.0px;height:431.0px;background:#000;"></div>
<div class="b" style="left:1369.0px;top:40.6px;width:12.6px;height:462.5px;background:linear-gradient(90deg,#fdfdfd,#f0f0f0);"></div>
<div class="b" style="left:792.8px;top:501.5px;width:576.2px;height:13.6px;background:linear-gradient(#f4f4f4,#ececec 40%,#e9e9e9);"></div>
<div class="b" style="left:1369.0px;top:503.1px;width:12.6px;height:12.0px;background:#c6c6c6;"></div>
<svg style="left:1372.8px;top:46.5px" width="5" height="3"><path d="M0 3L2.5 0L5 3z" fill="#333"/></svg>
<svg style="left:1372.8px;top:495.0px" width="5" height="3"><path d="M0 0L2.5 3L5 0z" fill="#333"/></svg>
<svg style="left:796.8px;top:505.7px" width="3.4" height="5"><path d="M3.4 0L0 2.5L3.4 5z" fill="#333"/></svg>
<svg style="left:1361.0px;top:505.7px" width="3.4" height="5"><path d="M0 0L3.4 2.5L0 5z" fill="#333"/></svg>
<svg style="left:793px;top:56px" width="576" height="431" viewBox="793 56 576 431">
<defs>
<radialGradient id="fb1" cx="0.5" cy="0.5" r="0.5"><stop offset="0" stop-color="#a4a4a4"/><stop offset="0.75" stop-color="#969696"/><stop offset="0.93" stop-color="#808080"/><stop offset="1" stop-color="#4a4a4a"/></radialGradient>
<radialGradient id="fb2" cx="0.5" cy="0.5" r="0.5"><stop offset="0" stop-color="#8e8e8e"/><stop offset="0.7" stop-color="#868686"/><stop offset="0.92" stop-color="#6c6c6c"/><stop offset="1" stop-color="#3a3a3a"/></radialGradient>
<radialGradient id="sp1" cx="0.5" cy="0.5" r="0.5"><stop offset="0" stop-color="#fff"/><stop offset="0.82" stop-color="#fdfdfd"/><stop offset="1" stop-color="#d0d0d0" stop-opacity="0.6"/></radialGradient>
<radialGradient id="sp2" cx="0.5" cy="0.5" r="0.5"><stop offset="0" stop-color="#f4f4f4"/><stop offset="0.8" stop-color="#ececec"/><stop offset="1" stop-color="#c0c0c0" stop-opacity="0.6"/></radialGradient>
<filter id="bl"><feGaussianBlur stdDeviation="0.7"/></filter>
</defs>
<g filter="url(#bl)">
<circle cx="966.3" cy="225.6" r="42.6" fill="url(#fb1)"/>
<path d="M924.5 222.5 C929 221.5 933 224 937 224.5 L937 229 C932 228 928 226 925 233 Z" fill="#e8e8e8"/>
<circle cx="946.6" cy="225.6" r="12.8" fill="url(#sp1)"/>
<circle cx="983" cy="224.8" r="12.9" fill="url(#sp2)"/>
<circle cx="970.4" cy="237" r="1.6" fill="#3c3c3c"/><circle cx="993.6" cy="233" r="1.5" fill="#4a4a4a"/><circle cx="966" cy="226" r="1.8" fill="#b4b4b4"/>
<circle cx="1217.8" cy="227" r="42.3" fill="url(#fb2)"/>
<circle cx="1200.4" cy="227.2" r="12.8" fill="url(#sp2)"/>
<circle cx="1237.6" cy="226" r="13" fill="url(#sp1)"/>
<circle cx="1218" cy="227" r="2.4" fill="#1c1c1c"/>
</g></svg>
<svg style="left:793px;top:56px" width="576" height="431" viewBox="793 56 576 431"><rect x="807.08" y="56" width="1.05" height="431" fill="#c2c2c2"/><rect x="944.18" y="56" width="1.05" height="431" fill="#c2c2c2"/><rect x="1081.25" y="56" width="1.1" height="431" fill="#a62a34"/><rect x="1217.97" y="56" width="1.05" height="431" fill="#c2c2c2"/><rect x="1354.97" y="56" width="1.05" height="431" fill="#c2c2c2"/><rect x="793" y="134.10" width="576" height="1.05" fill="#c2c2c2"/><rect x="793" y="271.90" width="576" height="1.05" fill="#c02c36"/><rect x="793" y="409.30" width="576" height="1.05" fill="#c2c2c2"/></svg>
<div class="t" style="left:1082.4px;top:125.5px;font-size:10px;color:#d0d0d0;transform:scaleX(0.824);transform-origin:0 0;">200</div>
<div class="t" style="left:1082.4px;top:400.4px;font-size:10px;color:#d0d0d0;transform:scaleX(0.831);transform-origin:0 0;">-200</div>
<div class="t" style="left:944.9px;top:262.9px;font-size:10px;color:#d0d0d0;transform:scaleX(0.831);transform-origin:0 0;">-200</div>
<div class="t" style="left:1083.0px;top:262.9px;font-size:10px;color:#d0d0d0;transform:scaleX(0.824);transform-origin:0 0;">0</div>
<div class="t" style="left:1219.2px;top:262.9px;font-size:10px;color:#d0d0d0;transform:scaleX(0.824);transform-origin:0 0;">200</div>
<div class="t" style="left:1022.8px;top:25.3px;font-size:8.6px;color:#e61414;font-weight:bold;transform:scaleX(1.163);transform-origin:0 0;">PM</div>
<div class="b" style="left:1204.0px;top:35.4px;width:98.5px;height:27.0px;background:#d2d2d2;border:1px solid #ececec;border-bottom-color:#dcdcdc;"></div>
<div class="b" style="left:1207.0px;top:38.9px;width:21.2px;height:21.0px;background:#b7b7b7;border:1px solid #a0a0a0;border-top-color:#c6c6c6;border-left-color:#c4c4c4;"></div>
<svg style="left:1206.6px;top:39.4px" width="22" height="20" viewBox="0 0 22 20"><g transform="translate(1.9,2.9) scale(0.86)"><circle cx="12.6" cy="8.2" r="4.6" fill="#a8d8c6" stroke="#111" stroke-width="1.5"/><path d="M9.2 11.8L4.6 16.2" stroke="#111" stroke-width="2.1" stroke-linecap="round"/></g></svg>
<div class="b" style="left:1230.0px;top:38.9px;width:21.2px;height:21.0px;background:#b7b7b7;border:1px solid #a0a0a0;border-top-color:#c6c6c6;border-left-color:#c4c4c4;"></div>
<svg style="left:1229.6px;top:39.4px" width="22" height="20" viewBox="0 0 22 20"><g transform="translate(-0.4,3.0) scale(1.02,0.9)"><path d="M7.2 11.6 L5.2 9.4 C4.4 8.6 5.4 7.6 6.3 8.3 L7.6 9.5 L7.6 5.6 C7.6 4.5 9.1 4.5 9.2 5.6 L9.3 8.2 L9.4 4.6 C9.5 3.5 11 3.5 11.1 4.6 L11.2 8.2 L11.5 5 C11.6 4 13.1 4 13.1 5.1 L13.1 8.6 L13.6 6.6 C13.9 5.7 15.2 5.9 15.1 7 L14.8 11.6 C14.6 14.2 13.4 15.6 11.2 15.6 L10 15.6 C8.6 15.6 7.8 14.6 7.2 11.6 Z" fill="none" stroke="#111" stroke-width="1.25" stroke-linejoin="round"/></g></svg>
<div class="b" style="left:1253.0px;top:38.9px;width:22.5px;height:21.0px;background:#b7b7b7;border:1px solid #a0a0a0;border-top-color:#c6c6c6;border-left-color:#c4c4c4;"></div>
<svg style="left:1253.2px;top:39.4px" width="22" height="20" viewBox="0 0 22 20"><g transform="translate(1.3,2.6) scale(0.88)"><rect x="6" y="6" width="10.4" height="8.4" fill="none" stroke="#111" stroke-width="1.5"/></g></svg>
<div class="b" style="left:1278.0px;top:38.9px;width:22.0px;height:21.0px;background:#fdfdfd;"></div>
<svg style="left:1278.0px;top:39.4px" width="22" height="20" viewBox="0 0 22 20"><g transform="translate(0.6,2.2) scale(0.9)"><path d="M11.2 5.4 C8.4 6 7.4 9.4 9 11.6 C10.6 13.8 14.4 13.4 15.2 10.4" fill="none" stroke="#111" stroke-width="1.6" stroke-linecap="round"/><path d="M11.4 9.8 L13 9.2" stroke="#111" stroke-width="1.5" stroke-linecap="round"/></g></svg>
<div class="b" style="left:1302.6px;top:35.2px;width:84.4px;height:26.4px;background:#bcbcbc;border:1px solid #1c1c1c;box-shadow:inset 0 0 0 1px #d4d4d4;"></div>
<div class="b" style="left:1308.0px;top:40.6px;width:22.0px;height:16.8px;background:radial-gradient(ellipse at 40% 40%,#f81c14,#e60808 75%);border-radius:50%;box-shadow:0 0 0 0.8px #d86a6a;"></div>
<div class="t" style="left:1310.0px;top:45.1px;font-size:10.5px;color:#7a0c0c;">Left</div>
<div class="b" style="left:1332.0px;top:41.2px;width:22.6px;height:16.2px;background:radial-gradient(ellipse,#a2a2a2,#8e8e8e);border-radius:50%;box-shadow:0 0 0 0.8px #7e7e7e;"></div>
<div class="t" style="left:1330.6px;top:45.1px;font-size:10.5px;color:#161616;transform:scaleX(0.995);transform-origin:0 0;">Right</div>
<div class="b" style="left:1357.0px;top:39.6px;width:27.6px;height:19.0px;background:#8b8b8b;border:1px solid #7a7a7a;border-top-color:#a4a4a4;"></div>
<div class="b" style="left:1365.0px;top:45.0px;width:11.2px;height:7.6px;background:#fbfbfb;"></div>
<div class="b" style="left:1368.0px;top:50.4px;width:5.5px;height:1.0px;background:#9a9a9a;"></div>
<div class="gb" style="left:1290.0px;top:69.4px;width:81.4px;height:22.0px;background:linear-gradient(#d2d2d2 0,#c6c6c6 48%,#8e8e8e 52%,#a6a6a6 100%);"></div>
<div class="t" style="left:1299.0px;top:74.3px;font-size:13.6px;color:#111;transform:scaleX(0.977);transform-origin:0 0;">PM display</div>
<svg style="left:801.1px;top:146.7px" width="30" height="34"><use href="#dup"/></svg>
<svg style="left:801.1px;top:175.4px" width="30" height="34"><use href="#aup"/></svg>
<svg style="left:801.0px;top:235.2px" width="30" height="34"><use href="#adn"/></svg>
<svg style="left:800.9px;top:259.6px" width="30" height="34"><use href="#ddn"/></svg>
<svg style="left:838.5px;top:146.7px" width="30" height="34"><use href="#dup"/></svg>
<svg style="left:838.5px;top:175.4px" width="30" height="34"><use href="#aup"/></svg>
<svg style="left:838.4px;top:235.2px" width="30" height="34"><use href="#adn"/></svg>
<svg style="left:838.3px;top:259.6px" width="30" height="34"><use href="#ddn"/></svg>
<svg style="left:1300.2px;top:146.7px" width="30" height="34"><use href="#dup"/></svg>
<svg style="left:1300.2px;top:175.4px" width="30" height="34"><use href="#aup"/></svg>
<svg style="left:1300.1px;top:235.2px" width="30" height="34"><use href="#adn"/></svg>
<svg style="left:1300.0px;top:259.6px" width="30" height="34"><use href="#ddn"/></svg>
<svg style="left:1338.0px;top:146.7px" width="30" height="34"><use href="#dup"/></svg>
<svg style="left:1338.0px;top:175.4px" width="30" height="34"><use href="#aup"/></svg>
<svg style="left:1337.9px;top:235.2px" width="30" height="34"><use href="#adn"/></svg>
<svg style="left:1337.8px;top:259.6px" width="30" height="34"><use href="#ddn"/></svg>
<div class="bb" style="left:797.9px;top:204.0px;width:33.5px;height:24.2px;"></div>
<div class="t" style="left:809.0px;top:212.5px;font-size:9.2px;color:#f6f8ff;font-weight:bold;text-shadow:0 0 1px #203080;">LZ</div>
<div class="bb" style="left:836.2px;top:204.0px;width:34.6px;height:24.2px;"></div>
<div class="t" style="left:842.2px;top:212.5px;font-size:9.2px;color:#f6f8ff;font-weight:bold;text-shadow:0 0 1px #203080;">LYaw</div>
<div class="bb" style="left:1299.0px;top:203.6px;width:33.8px;height:24.4px;"></div>
<div class="t" style="left:1309.8px;top:212.2px;font-size:9.2px;color:#f6f8ff;font-weight:bold;text-shadow:0 0 1px #203080;">RZ</div>
<div class="bb" style="left:1337.6px;top:203.6px;width:34.4px;height:24.4px;"></div>
<div class="t" style="left:1342.7px;top:212.2px;font-size:9.2px;color:#f6f8ff;font-weight:bold;text-shadow:0 0 1px #203080;">RYaw</div>
<svg style="left:0;top:0" width="1500" height="813"><g transform="translate(806.2,301.8) scale(1.0,1)"><path d="M0.3 21.9 C0.8 13.5 6.5 7.2 14.6 6.6 L14.2 0.6 L24 9.6 L15.6 18.6 L15.4 13.2 C12.2 13.4 10.2 16.5 9.8 21.9 Z" fill="url(#gg)" stroke="#2e5c18" stroke-width="0.6" stroke-linejoin="round"/><path d="M2.2 17 C3.6 12 8 8.6 14.6 8 L14.9 3 L21.6 9.4" fill="none" stroke="#f2ffe0" stroke-opacity="0.55" stroke-width="1.6" stroke-linejoin="round"/></g></svg>
<svg style="left:0;top:0" width="1500" height="813"><g transform="translate(858.6,301.8) scale(-1.0,1)"><path d="M0.3 21.9 C0.8 13.5 6.5 7.2 14.6 6.6 L14.2 0.6 L24 9.6 L15.6 18.6 L15.4 13.2 C12.2 13.4 10.2 16.5 9.8 21.9 Z" fill="url(#gg)" stroke="#2e5c18" stroke-width="0.6" stroke-linejoin="round"/><path d="M2.2 17 C3.6 12 8 8.6 14.6 8 L14.9 3 L21.6 9.4" fill="none" stroke="#f2ffe0" stroke-opacity="0.55" stroke-width="1.6" stroke-linejoin="round"/></g></svg>
<svg style="left:0;top:0" width="1500" height="813"><g transform="translate(1310.0,301.8) scale(1.06,1)"><path d="M0.3 21.9 C0.8 13.5 6.5 7.2 14.6 6.6 L14.2 0.6 L24 9.6 L15.6 18.6 L15.4 13.2 C12.2 13.4 10.2 16.5 9.8 21.9 Z" fill="url(#gg)" stroke="#2e5c18" stroke-width="0.6" stroke-linejoin="round"/><path d="M2.2 17 C3.6 12 8 8.6 14.6 8 L14.9 3 L21.6 9.4" fill="none" stroke="#f2ffe0" stroke-opacity="0.55" stroke-width="1.6" stroke-linejoin="round"/></g></svg>
<svg style="left:0;top:0" width="1500" height="813"><g transform="translate(1363.7,301.8) scale(-1.08,1)"><path d="M0.3 21.9 C0.8 13.5 6.5 7.2 14.6 6.6 L14.2 0.6 L24 9.6 L15.6 18.6 L15.4 13.2 C12.2 13.4 10.2 16.5 9.8 21.9 Z" fill="url(#gg)" stroke="#2e5c18" stroke-width="0.6" stroke-linejoin="round"/><path d="M2.2 17 C3.6 12 8 8.6 14.6 8 L14.9 3 L21.6 9.4" fill="none" stroke="#f2ffe0" stroke-opacity="0.55" stroke-width="1.6" stroke-linejoin="round"/></g></svg>
<div class="t" style="left:812.8px;top:309.8px;font-size:9px;color:#123a6a;font-weight:bold;transform:scaleX(0.780);transform-origin:0 0;">0+</div>
<div class="t" style="left:842.4px;top:309.8px;font-size:9px;color:#123a6a;font-weight:bold;transform:scaleX(0.800);transform-origin:0 0;">T-</div>
<div class="t" style="left:1316.6px;top:309.8px;font-size:9px;color:#123a6a;font-weight:bold;transform:scaleX(0.780);transform-origin:0 0;">0+</div>
<div class="t" style="left:1345.6px;top:309.8px;font-size:9px;color:#123a6a;font-weight:bold;transform:scaleX(0.800);transform-origin:0 0;">T-</div>
<div class="gb" style="left:792.6px;top:464.4px;width:120.8px;height:38.0px;background:linear-gradient(#cbcbcb 0,#c8c8c8 30%,#cfcfcf 52%,#8b8b8b 55%,#999 80%,#a9a9a9 100%);"></div>
<svg style="left:0;top:0" width="1500" height="813"><rect x="794.6" y="471.1" width="20.4" height="1" fill="#3a8ee8"/><path d="M794.6 471.6L804.2 467.5L804.2 475.7z" fill="#3a8ee8"/><rect x="815.0" y="471.1" width="20.4" height="1" fill="#3a8ee8"/><path d="M835.4 471.6L825.8 467.5L825.8 475.7z" fill="#3a8ee8"/></svg>
<div class="t" style="left:839.6px;top:468.7px;font-size:11.4px;color:#111;transform:scaleX(0.892);transform-origin:0 0;-webkit-text-stroke:0.15px #111;">Fiber wide</div>
<div class="inp" style="left:794.1px;top:482.1px;width:56.6px;height:17.2px;background:#fff;"></div>
<div class="t" style="left:797.6px;top:485.6px;font-size:10.6px;color:#101010;transform:scaleX(0.900);transform-origin:0 0;">13000</div>
<div class="sp" style="left:839.2px;top:483.6px;width:10.0px;height:6.9px;"></div>
<div class="sp" style="left:839.2px;top:490.9px;width:10.0px;height:6.9px;"></div>
<svg style="left:842.0px;top:486.0px" width="4.4" height="2.6"><path d="M0 2.6L2.2 0L4.4 2.6z" fill="#5e5e5e"/></svg>
<svg style="left:842.0px;top:493.1px" width="4.4" height="2.6"><path d="M0 0L2.2 2.6L4.4 0z" fill="#5e5e5e"/></svg>
<div class="t" style="left:851.8px;top:484.4px;font-size:11px;color:#111;transform:scaleX(0.903);transform-origin:0 0;">um</div>
<div class="gb" style="left:945.6px;top:464.4px;width:75.4px;height:38.0px;background:linear-gradient(#cbcbcb 0,#c8c8c8 30%,#cfcfcf 52%,#8b8b8b 55%,#999 80%,#a9a9a9 100%);"></div>
<svg style="left:0;top:0" width="1500" height="813"><rect x="952.0" y="471.9" width="38.5" height="1" fill="#3a8ee8"/><path d="M990.5 472.4L982.5 469.0L982.5 475.8z" fill="#3a8ee8"/><rect x="990.8" y="467.9" width="1.6" height="9" fill="#3a8ee8"/></svg>
<div class="t" style="left:955.0px;top:480.1px;font-size:11.4px;color:#111;transform:scaleX(0.967);transform-origin:0 0;">Left capture</div>
<div class="gb" style="left:1052.6px;top:464.4px;width:75.4px;height:38.0px;background:linear-gradient(#cbcbcb 0,#c8c8c8 30%,#cfcfcf 52%,#8b8b8b 55%,#999 80%,#a9a9a9 100%);"></div>
<svg style="left:0;top:0" width="1500" height="813"><rect x="1085.5" y="471.9" width="36.5" height="1" fill="#3a8ee8"/><path d="M1085.5 472.4L1093.5 469.0L1093.5 475.8z" fill="#3a8ee8"/><rect x="1083.2" y="467.9" width="1.6" height="9" fill="#3a8ee8"/></svg>
<div class="t" style="left:1059.0px;top:480.1px;font-size:11.4px;color:#111;transform:scaleX(0.951);transform-origin:0 0;">Right capture</div>
<div class="gb" style="left:1160.0px;top:464.4px;width:75.2px;height:38.0px;background:linear-gradient(#cbcbcb 0,#c8c8c8 30%,#cfcfcf 52%,#8b8b8b 55%,#999 80%,#a9a9a9 100%);"></div>
<svg style="left:0;top:0" width="1500" height="813"><rect x="1171.0" y="471.9" width="19.6" height="1" fill="#3a8ee8"/><path d="M1190.6 472.4L1182.6 469.0L1182.6 475.8z" fill="#3a8ee8"/><rect x="1191.6" y="467.9" width="1.6" height="9" fill="#3a8ee8"/><rect x="1198.8" y="467.9" width="1.6" height="9" fill="#3a8ee8"/><rect x="1203.0" y="471.9" width="19.0" height="1" fill="#3a8ee8"/><path d="M1203.0 472.4L1211.0 469.0L1211.0 475.8z" fill="#3a8ee8"/></svg>
<div class="t" style="left:1173.0px;top:480.1px;font-size:11.4px;color:#111;transform:scaleX(0.915);transform-origin:0 0;">LR capture</div>
<svg style="left:1247.6px;top:469.4px" width="18" height="32"><use href="#dlt"/></svg>
<svg style="left:1269.8px;top:469.6px" width="18" height="32"><use href="#alt"/></svg>
<div class="bb" style="left:1289.2px;top:473.0px;width:35.8px;height:25.4px;"></div>
<div class="t" style="left:1300.2px;top:481.4px;font-size:10px;color:#f6f8ff;font-weight:bold;text-shadow:0 0 1px #203080;">RX</div>
<svg style="left:1326.6px;top:469.6px" width="18" height="32"><use href="#art"/></svg>
<svg style="left:1350.2px;top:469.4px" width="18" height="32"><use href="#drt"/></svg>
<div class="b" style="left:1394.6px;top:30.0px;width:93.2px;height:59.2px;background:#fb0808;border-radius:15px;border:1.6px solid #ff6a6a;border-bottom-color:#a80808;border-right-color:#b80808;"></div>
<div class="t" style="left:1419.0px;top:51.4px;font-size:18px;color:#6a0a0a;transform:scaleX(0.904);transform-origin:0 0;">STOP</div>
<div class="b" style="left:1394.6px;top:97.6px;width:93.2px;height:57.8px;background:#fafafa;border-radius:15px;box-shadow:1.2px 1.8px 0.5px #262626;"></div>
<div class="b" style="left:1397.0px;top:118.6px;width:16.6px;height:18.8px;background:#fdfdfd;border:1px solid #b8b8b8;"></div>
<div class="t" style="left:1416.0px;top:118.4px;font-size:18px;color:#161616;transform:scaleX(0.808);transform-origin:0 0;">RESET</div>
<div class="b" style="left:1394.6px;top:165.0px;width:93.2px;height:58.6px;background:#fafafa;border-radius:15px;box-shadow:1.2px 1.8px 0.5px #262626;"></div>
<div class="t" style="left:1407.5px;top:185.4px;font-size:18px;color:#161616;transform:scaleX(1.015);transform-origin:0 0;">Loading</div>
<div class="b" style="left:1394.6px;top:232.0px;width:93.2px;height:58.8px;background:#fafafa;border-radius:15px;box-shadow:1.2px 1.8px 0.5px #262626;"></div>
<div class="t" style="left:1420.5px;top:240.8px;font-size:18px;color:#161616;transform:scaleX(1.080);transform-origin:0 0;">Auto</div>
<div class="t" style="left:1419.0px;top:264.4px;font-size:18px;color:#161616;transform:scaleX(1.074);transform-origin:0 0;">Align</div>
<div class="b" style="left:1394.6px;top:299.6px;width:93.2px;height:58.4px;background:#138a92;border-radius:15px;border:1.4px solid #6ad4d4;border-bottom-color:#0a4e54;border-right-color:#0a5a60;"></div>
<div class="t" style="left:1408.0px;top:319.6px;font-size:18px;color:#14264e;transform:scaleX(1.023);transform-origin:0 0;">Splicing</div>
<div class="b" style="left:1394.6px;top:367.4px;width:93.2px;height:58.6px;background:#c00ef2;border-radius:15px;border:1.4px solid #e88aff;border-bottom-color:#5a0878;border-right-color:#6a0888;"></div>
<div class="t" style="left:1420.5px;top:376.2px;font-size:18px;color:#4e0f7c;transform:scaleX(1.080);transform-origin:0 0;">Auto</div>
<div class="t" style="left:1408.0px;top:399.6px;font-size:18px;color:#4e0f7c;transform:scaleX(1.023);transform-origin:0 0;">Splicing</div>
<div class="b" style="left:1394.6px;top:434.8px;width:93.2px;height:58.6px;background:#528a2a;border-radius:15px;border:1.2px solid #6a9c42;border-bottom-color:#2c4e14;border-right-color:#34581a;"></div>
<div class="t" style="left:1404.6px;top:455.2px;font-size:18px;color:#1a4a1c;transform:scaleX(1.041);transform-origin:0 0;">Tapering</div>
<div class="b" style="left:1394.6px;top:501.4px;width:93.2px;height:59.2px;background:#fbfbfb;border-radius:15px;box-shadow:1.2px 1.8px 0.5px #262626;"></div>
<div class="t" style="left:1408.0px;top:508.1px;font-size:11.4px;color:#161616;">0</div>
<div class="t" style="left:1452.6px;top:507.5px;font-size:11.4px;color:#161616;transform:scaleX(0.884);transform-origin:0 0;">GF</div>
<div class="t" style="left:1398.8px;top:525.5px;font-size:13.6px;color:#161616;transform:scaleX(1.051);transform-origin:0 0;">Tension clear</div>
<div class="b" style="left:1384.4px;top:567.8px;width:104.8px;height:235.8px;background:#6b6b82;border-radius:24px;border:1px solid #c6c6d4;"></div>
<div class="t" style="left:1418.0px;top:589.6px;font-size:18px;color:#cacae2;transform:scaleX(0.902);transform-origin:0 0;">Laser</div>
<div class="t" style="left:1388.0px;top:648.1px;font-size:13.4px;color:#e8e8ee;transform:scaleX(0.898);transform-origin:0 0;">Time_s</div>
<div class="inp" style="left:1429.0px;top:644.4px;width:50.4px;height:21.2px;background:#fff;"></div>
<div class="t" style="left:1433.5px;top:648.9px;font-size:12.6px;color:#101010;transform:scaleX(0.900);transform-origin:0 0;">5</div>
<div class="sp" style="left:1467.9px;top:645.9px;width:10.0px;height:8.9px;"></div>
<div class="sp" style="left:1467.9px;top:655.2px;width:10.0px;height:8.9px;"></div>
<svg style="left:1470.7px;top:649.2px" width="4.4" height="2.6"><path d="M0 2.6L2.2 0L4.4 2.6z" fill="#5e5e5e"/></svg>
<svg style="left:1470.7px;top:658.3px" width="4.4" height="2.6"><path d="M0 0L2.2 2.6L4.4 0z" fill="#5e5e5e"/></svg>
<div class="t" style="left:1399.4px;top:677.1px;font-size:13.4px;color:#e8e8ee;transform:scaleX(0.834);transform-origin:0 0;">P_%</div>
<div class="inp" style="left:1429.0px;top:673.4px;width:50.4px;height:21.2px;background:#fff;"></div>
<div class="t" style="left:1433.5px;top:677.9px;font-size:12.6px;color:#101010;transform:scaleX(0.900);transform-origin:0 0;">15</div>
<div class="sp" style="left:1467.9px;top:674.9px;width:10.0px;height:8.9px;"></div>
<div class="sp" style="left:1467.9px;top:684.2px;width:10.0px;height:8.9px;"></div>
<svg style="left:1470.7px;top:678.2px" width="4.4" height="2.6"><path d="M0 2.6L2.2 0L4.4 2.6z" fill="#5e5e5e"/></svg>
<svg style="left:1470.7px;top:687.3px" width="4.4" height="2.6"><path d="M0 0L2.2 2.6L4.4 0z" fill="#5e5e5e"/></svg>
<div class="b" style="left:1398.4px;top:721.4px;width:81.8px;height:48.0px;background:#3a98fe;border-radius:11px;border:1.6px solid #7cc0ff;border-bottom-color:#174c96;border-right-color:#1a56a6;box-shadow:1px 1.5px 0 #123c78;"></div>
<div class="t" style="left:1411.6px;top:732.8px;font-size:26px;color:#0c1220;transform:scaleX(0.991);transform-origin:0 0;">Start</div>
<div class="b" style="left:178.6px;top:563.6px;width:1200.4px;height:241.0px;background:#4a4a4a;border:1px solid #a04e56;border-left-color:#c8a8a8;border-right:1.6px solid #74232b;border-bottom:0;box-shadow:inset 3px 0 4px -1px rgba(120,70,60,.55);"></div>
<div class="b" style="left:179.8px;top:542.6px;width:108.8px;height:21.8px;background:#4a4a4a;border:1px solid #b8626a;border-left-color:#c08088;border-right:1.5px solid #8a262e;border-bottom:0;border-radius:2px 2px 0 0;background:#4c4849;"></div>
<div class="t" style="left:187.6px;top:547.1px;font-size:12.4px;color:#e2e2e2;font-weight:bold;">System monitor</div>
<div class="b" style="left:289.8px;top:542.6px;width:67.8px;height:21.8px;background:#4a4a4a;border:1px solid #b8626a;border-left-color:#c08088;border-right:1.5px solid #8a262e;border-bottom:0;border-radius:2px 2px 0 0;background:#4c4849;"></div>
<div class="t" style="left:297.4px;top:547.1px;font-size:12.4px;color:#e2e2e2;font-weight:bold;transform:scaleX(0.984);transform-origin:0 0;">Date cali</div>
<div class="b" style="left:359.6px;top:542.6px;width:58.0px;height:21.8px;background:#4a4a4a;border:1px solid #b8626a;border-left-color:#c08088;border-right:1.5px solid #8a262e;border-bottom:0;border-radius:2px 2px 0 0;background:#4c4849;"></div>
<div class="t" style="left:366.8px;top:547.1px;font-size:12.4px;color:#e2e2e2;font-weight:bold;transform:scaleX(0.925);transform-origin:0 0;">Axis set</div>
<div class="b" style="left:418.4px;top:541.0px;width:62.2px;height:25.4px;background:#4a4a4a;border:1px solid #b8626a;border-left-color:#c08088;border-right:1.5px solid #8a262e;border-bottom:0;border-radius:2px 2px 0 0;background:#4c4849;"></div>
<div class="t" style="left:425.6px;top:545.3px;font-size:12.4px;color:#e2e2e2;font-weight:bold;transform:scaleX(0.929);transform-origin:0 0;">CCD set</div>
<div class="b" style="left:481.2px;top:542.6px;width:63.8px;height:21.8px;background:#4a4a4a;border:1px solid #b8626a;border-left-color:#c08088;border-right:1.5px solid #8a262e;border-bottom:0;border-radius:2px 2px 0 0;background:#4c4849;"></div>
<div class="t" style="left:487.6px;top:547.1px;font-size:12.4px;color:#e2e2e2;font-weight:bold;transform:scaleX(0.933);transform-origin:0 0;">Laser set</div>
<div class="b" style="left:546.4px;top:542.6px;width:78.2px;height:21.8px;background:#4a4a4a;border:1px solid #b8626a;border-left-color:#c08088;border-right:1.5px solid #8a262e;border-bottom:0;border-radius:2px 2px 0 0;background:#4c4849;"></div>
<div class="t" style="left:554.0px;top:547.1px;font-size:12.4px;color:#e2e2e2;font-weight:bold;transform:scaleX(0.989);transform-origin:0 0;">Cutting set</div>
<div class="b" style="left:626.4px;top:542.6px;width:118.4px;height:21.8px;background:#4a4a4a;border:1px solid #b8626a;border-left-color:#c08088;border-right:1.5px solid #8a262e;border-bottom:0;border-radius:2px 2px 0 0;background:#4c4849;"></div>
<div class="t" style="left:633.8px;top:547.1px;font-size:12.4px;color:#e2e2e2;font-weight:bold;transform:scaleX(0.988);transform-origin:0 0;">system activation</div>
<div class="b" style="left:746.2px;top:542.6px;width:66.2px;height:21.8px;background:#4a4a4a;border:1px solid #b8626a;border-left-color:#c08088;border-right:1.5px solid #8a262e;border-bottom:0;border-radius:2px 2px 0 0;background:#4c4849;"></div>
<div class="b" style="left:813.6px;top:542.6px;width:98.4px;height:21.8px;background:#4a4a4a;border:1px solid #b8626a;border-left-color:#c08088;border-right:1.5px solid #8a262e;border-bottom:0;border-radius:2px 2px 0 0;background:#4c4849;"></div>
<div class="t" style="left:821.2px;top:547.1px;font-size:12.4px;color:#e2e2e2;font-weight:bold;transform:scaleX(0.962);transform-origin:0 0;">Laser measure</div>
<div class="b" style="left:913.4px;top:542.6px;width:117.6px;height:21.8px;background:#4a4a4a;border:1px solid #b8626a;border-left-color:#c08088;border-right:1.5px solid #8a262e;border-bottom:0;border-radius:2px 2px 0 0;background:#4c4849;"></div>
<div class="t" style="left:921.0px;top:547.1px;font-size:12.4px;color:#e2e2e2;font-weight:bold;transform:scaleX(1.020);transform-origin:0 0;">Tapering monitor</div>
<div class="b" style="left:1032.6px;top:542.6px;width:98.8px;height:21.8px;background:#4a4a4a;border:1px solid #b8626a;border-left-color:#c08088;border-right:1.5px solid #8a262e;border-bottom:0;border-radius:2px 2px 0 0;background:#4c4849;"></div>
<div class="t" style="left:1040.2px;top:547.1px;font-size:12.4px;color:#e2e2e2;font-weight:bold;transform:scaleX(1.029);transform-origin:0 0;">Manual move</div>
<div class="b" style="left:1133.0px;top:542.6px;width:67.4px;height:21.8px;background:#4a4a4a;border:1px solid #b8626a;border-left-color:#c08088;border-right:1.5px solid #8a262e;border-bottom:0;border-radius:2px 2px 0 0;background:#4c4849;"></div>
<div class="t" style="left:1140.0px;top:547.1px;font-size:12.4px;color:#e2e2e2;font-weight:bold;transform:scaleX(0.994);transform-origin:0 0;">Cut/Scan</div>
<div class="b" style="left:1202.0px;top:542.6px;width:76.4px;height:21.8px;background:#4a4a4a;border:1px solid #b8626a;border-left-color:#c08088;border-right:1.5px solid #8a262e;border-bottom:0;border-radius:2px 2px 0 0;background:#4c4849;"></div>
<div class="t" style="left:1209.6px;top:547.1px;font-size:12.4px;color:#e2e2e2;font-weight:bold;transform:scaleX(1.020);transform-origin:0 0;">Alignment</div>
<div class="b" style="left:1280.0px;top:542.6px;width:78.6px;height:21.8px;background:#4a4a4a;border:1px solid #b8626a;border-left-color:#c08088;border-right:1.5px solid #8a262e;border-bottom:0;border-radius:2px 2px 0 0;background:#4c4849;"></div>
<div class="t" style="left:1287.0px;top:547.1px;font-size:12.4px;color:#e2e2e2;font-weight:bold;transform:scaleX(0.925);transform-origin:0 0;">Process set</div>
<div class="b" style="left:219.8px;top:573.8px;width:223.0px;height:203.8px;background:#6f6f6f;border-radius:46px;"></div>
<div class="b" style="left:445.8px;top:573.8px;width:226.0px;height:204.2px;background:#6f6f6f;border-radius:46px;"></div>
<div class="b" style="left:675.2px;top:579.2px;width:109.6px;height:200.6px;background:#6f6f6f;border-radius:27px;"></div>
<div class="b" style="left:851.2px;top:579.2px;width:185.2px;height:198.4px;background:#6f6f6f;border-radius:38px;"></div>
<div class="b" style="left:1048.0px;top:579.2px;width:136.8px;height:198.4px;background:#6f6f6f;border-radius:32px;"></div>
<div class="t" style="left:310.4px;top:584.9px;font-size:17px;color:#ececec;transform:scaleX(1.036);transform-origin:0 0;">Idle</div>
<div class="b" style="left:341.4px;top:589.0px;width:9.2px;height:9.2px;background:linear-gradient(135deg,#d4d4d4,#fcfcfc);border:1px solid #9c9c9c;"></div>
<svg style="left:342.8px;top:590.2px" width="7" height="7"><path d="M0.8 3.4L2.8 5.6L6.2 0.8" fill="none" stroke="#1a1a1a" stroke-width="1.4"/></svg>
<div class="t" style="left:226.3px;top:620.8px;font-size:11.4px;color:#dcdcdc;transform:scaleX(0.874);transform-origin:0 0;">Exposure</div>
<div class="t" style="left:288.3px;top:620.8px;font-size:11.4px;color:#dcdcdc;transform:scaleX(0.871);transform-origin:0 0;">Gamma</div>
<div class="t" style="left:341.4px;top:620.8px;font-size:11.4px;color:#dcdcdc;transform:scaleX(0.839);transform-origin:0 0;">Gain</div>
<div class="t" style="left:393.0px;top:620.8px;font-size:11.4px;color:#dcdcdc;transform:scaleX(0.794);transform-origin:0 0;">LED</div>
<div class="inp" style="left:226.3px;top:635.2px;width:51.1px;height:18.0px;background:#fff;"></div>
<div class="t" style="left:229.8px;top:638.8px;font-size:11px;color:#101010;transform:scaleX(0.900);transform-origin:0 0;">50000</div>
<div class="sp" style="left:265.4px;top:636.7px;width:10.5px;height:7.3px;"></div>
<div class="sp" style="left:265.4px;top:644.4px;width:10.5px;height:7.3px;"></div>
<svg style="left:268.4px;top:639.2px" width="4.4" height="2.6"><path d="M0 2.6L2.2 0L4.4 2.6z" fill="#5e5e5e"/></svg>
<svg style="left:268.4px;top:646.8px" width="4.4" height="2.6"><path d="M0 0L2.2 2.6L4.4 0z" fill="#5e5e5e"/></svg>
<div class="inp" style="left:279.4px;top:635.2px;width:50.2px;height:18.0px;background:#fff;"></div>
<div class="t" style="left:282.9px;top:638.8px;font-size:11px;color:#101010;transform:scaleX(0.900);transform-origin:0 0;">1</div>
<div class="sp" style="left:317.6px;top:636.7px;width:10.5px;height:7.3px;"></div>
<div class="sp" style="left:317.6px;top:644.4px;width:10.5px;height:7.3px;"></div>
<svg style="left:320.7px;top:639.2px" width="4.4" height="2.6"><path d="M0 2.6L2.2 0L4.4 2.6z" fill="#5e5e5e"/></svg>
<svg style="left:320.7px;top:646.8px" width="4.4" height="2.6"><path d="M0 0L2.2 2.6L4.4 0z" fill="#5e5e5e"/></svg>
<div class="inp" style="left:332.0px;top:635.2px;width:50.8px;height:18.0px;background:#fff;"></div>
<div class="t" style="left:335.5px;top:638.8px;font-size:11px;color:#101010;transform:scaleX(0.900);transform-origin:0 0;">1</div>
<div class="sp" style="left:370.8px;top:636.7px;width:10.5px;height:7.3px;"></div>
<div class="sp" style="left:370.8px;top:644.4px;width:10.5px;height:7.3px;"></div>
<svg style="left:373.9px;top:639.2px" width="4.4" height="2.6"><path d="M0 2.6L2.2 0L4.4 2.6z" fill="#5e5e5e"/></svg>
<svg style="left:373.9px;top:646.8px" width="4.4" height="2.6"><path d="M0 0L2.2 2.6L4.4 0z" fill="#5e5e5e"/></svg>
<div class="inp" style="left:384.2px;top:635.2px;width:50.6px;height:18.0px;background:#fff;"></div>
<div class="t" style="left:387.7px;top:638.8px;font-size:11px;color:#101010;transform:scaleX(0.900);transform-origin:0 0;">1</div>
<div class="sp" style="left:422.8px;top:636.7px;width:10.5px;height:7.3px;"></div>
<div class="sp" style="left:422.8px;top:644.4px;width:10.5px;height:7.3px;"></div>
<svg style="left:425.9px;top:639.2px" width="4.4" height="2.6"><path d="M0 2.6L2.2 0L4.4 2.6z" fill="#5e5e5e"/></svg>
<svg style="left:425.9px;top:646.8px" width="4.4" height="2.6"><path d="M0 0L2.2 2.6L4.4 0z" fill="#5e5e5e"/></svg>
<div class="t" style="left:194.2px;top:636.5px;font-size:12.2px;color:#dcdcdc;transform:scaleX(0.805);transform-origin:0 0;">TOP</div>
<div class="t" style="left:226.3px;top:666.8px;font-size:11.4px;color:#dcdcdc;transform:scaleX(0.874);transform-origin:0 0;">Exposure</div>
<div class="t" style="left:287.4px;top:666.8px;font-size:11.4px;color:#dcdcdc;transform:scaleX(0.868);transform-origin:0 0;">Gamma</div>
<div class="t" style="left:340.6px;top:666.8px;font-size:11.4px;color:#dcdcdc;transform:scaleX(0.839);transform-origin:0 0;">Gain</div>
<div class="inp" style="left:225.7px;top:681.4px;width:51.3px;height:18.0px;background:#fff;"></div>
<div class="t" style="left:229.2px;top:685.0px;font-size:11px;color:#101010;transform:scaleX(0.900);transform-origin:0 0;">50000</div>
<div class="sp" style="left:265.0px;top:682.9px;width:10.5px;height:7.3px;"></div>
<div class="sp" style="left:265.0px;top:690.6px;width:10.5px;height:7.3px;"></div>
<svg style="left:268.1px;top:685.4px" width="4.4" height="2.6"><path d="M0 2.6L2.2 0L4.4 2.6z" fill="#5e5e5e"/></svg>
<svg style="left:268.1px;top:692.9px" width="4.4" height="2.6"><path d="M0 0L2.2 2.6L4.4 0z" fill="#5e5e5e"/></svg>
<div class="inp" style="left:278.8px;top:681.4px;width:50.4px;height:18.0px;background:#fff;"></div>
<div class="t" style="left:282.3px;top:685.0px;font-size:11px;color:#101010;transform:scaleX(0.900);transform-origin:0 0;">1</div>
<div class="sp" style="left:317.2px;top:682.9px;width:10.5px;height:7.3px;"></div>
<div class="sp" style="left:317.2px;top:690.6px;width:10.5px;height:7.3px;"></div>
<svg style="left:320.2px;top:685.4px" width="4.4" height="2.6"><path d="M0 2.6L2.2 0L4.4 2.6z" fill="#5e5e5e"/></svg>
<svg style="left:320.2px;top:692.9px" width="4.4" height="2.6"><path d="M0 0L2.2 2.6L4.4 0z" fill="#5e5e5e"/></svg>
<div class="inp" style="left:331.4px;top:681.4px;width:51.0px;height:18.0px;background:#fff;"></div>
<div class="t" style="left:334.9px;top:685.0px;font-size:11px;color:#101010;transform:scaleX(0.900);transform-origin:0 0;">1</div>
<div class="sp" style="left:370.4px;top:682.9px;width:10.5px;height:7.3px;"></div>
<div class="sp" style="left:370.4px;top:690.6px;width:10.5px;height:7.3px;"></div>
<svg style="left:373.4px;top:685.4px" width="4.4" height="2.6"><path d="M0 2.6L2.2 0L4.4 2.6z" fill="#5e5e5e"/></svg>
<svg style="left:373.4px;top:692.9px" width="4.4" height="2.6"><path d="M0 0L2.2 2.6L4.4 0z" fill="#5e5e5e"/></svg>
<div class="t" style="left:193.8px;top:680.9px;font-size:12.2px;color:#dcdcdc;transform:scaleX(0.801);transform-origin:0 0;">SIDE</div>
<div class="t" style="left:224.9px;top:713.2px;font-size:11.4px;color:#dcdcdc;transform:scaleX(0.874);transform-origin:0 0;">Exposure</div>
<div class="t" style="left:287.7px;top:713.2px;font-size:11.4px;color:#dcdcdc;transform:scaleX(0.856);transform-origin:0 0;">Gamma</div>
<div class="t" style="left:334.0px;top:713.2px;font-size:11.4px;color:#dcdcdc;transform:scaleX(0.896);transform-origin:0 0;">Contrast</div>
<div class="t" style="left:385.7px;top:713.2px;font-size:11.4px;color:#dcdcdc;transform:scaleX(0.871);transform-origin:0 0;">Brightness</div>
<div class="inp" style="left:225.5px;top:727.2px;width:51.5px;height:18.0px;background:#fff;"></div>
<div class="t" style="left:229.0px;top:730.8px;font-size:11px;color:#101010;transform:scaleX(0.900);transform-origin:0 0;">200000</div>
<div class="sp" style="left:265.0px;top:728.7px;width:10.5px;height:7.3px;"></div>
<div class="sp" style="left:265.0px;top:736.4px;width:10.5px;height:7.3px;"></div>
<svg style="left:268.1px;top:731.2px" width="4.4" height="2.6"><path d="M0 2.6L2.2 0L4.4 2.6z" fill="#5e5e5e"/></svg>
<svg style="left:268.1px;top:738.8px" width="4.4" height="2.6"><path d="M0 0L2.2 2.6L4.4 0z" fill="#5e5e5e"/></svg>
<div class="inp" style="left:278.8px;top:727.2px;width:50.4px;height:18.0px;background:#fff;"></div>
<div class="t" style="left:282.3px;top:730.8px;font-size:11px;color:#101010;transform:scaleX(0.900);transform-origin:0 0;">1</div>
<div class="sp" style="left:317.2px;top:728.7px;width:10.5px;height:7.3px;"></div>
<div class="sp" style="left:317.2px;top:736.4px;width:10.5px;height:7.3px;"></div>
<svg style="left:320.2px;top:731.2px" width="4.4" height="2.6"><path d="M0 2.6L2.2 0L4.4 2.6z" fill="#5e5e5e"/></svg>
<svg style="left:320.2px;top:738.8px" width="4.4" height="2.6"><path d="M0 0L2.2 2.6L4.4 0z" fill="#5e5e5e"/></svg>
<div class="inp" style="left:331.4px;top:727.2px;width:51.4px;height:18.0px;background:#fff;"></div>
<div class="t" style="left:334.9px;top:730.8px;font-size:11px;color:#101010;transform:scaleX(0.900);transform-origin:0 0;">69</div>
<div class="sp" style="left:370.8px;top:728.7px;width:10.5px;height:7.3px;"></div>
<div class="sp" style="left:370.8px;top:736.4px;width:10.5px;height:7.3px;"></div>
<svg style="left:373.9px;top:731.2px" width="4.4" height="2.6"><path d="M0 2.6L2.2 0L4.4 2.6z" fill="#5e5e5e"/></svg>
<svg style="left:373.9px;top:738.8px" width="4.4" height="2.6"><path d="M0 0L2.2 2.6L4.4 0z" fill="#5e5e5e"/></svg>
<div class="inp" style="left:384.0px;top:727.2px;width:50.8px;height:18.0px;background:#fff;"></div>
<div class="t" style="left:387.5px;top:730.8px;font-size:11px;color:#101010;transform:scaleX(0.900);transform-origin:0 0;">218</div>
<div class="sp" style="left:422.8px;top:728.7px;width:10.5px;height:7.3px;"></div>
<div class="sp" style="left:422.8px;top:736.4px;width:10.5px;height:7.3px;"></div>
<svg style="left:425.9px;top:731.2px" width="4.4" height="2.6"><path d="M0 2.6L2.2 0L4.4 2.6z" fill="#5e5e5e"/></svg>
<svg style="left:425.9px;top:738.8px" width="4.4" height="2.6"><path d="M0 0L2.2 2.6L4.4 0z" fill="#5e5e5e"/></svg>
<div class="t" style="left:199.8px;top:729.5px;font-size:12.2px;color:#dcdcdc;transform:scaleX(0.863);transform-origin:0 0;">PM</div>
<div class="t" style="left:247.3px;top:753.0px;font-size:11.4px;color:#dcdcdc;transform:scaleX(0.749);transform-origin:0 0;">L_LED</div>
<div class="inp" style="left:278.8px;top:749.4px;width:50.4px;height:17.8px;background:#fff;"></div>
<div class="t" style="left:282.3px;top:752.9px;font-size:11px;color:#101010;transform:scaleX(0.900);transform-origin:0 0;">0.3</div>
<div class="sp" style="left:317.2px;top:750.9px;width:10.5px;height:7.2px;"></div>
<div class="sp" style="left:317.2px;top:758.5px;width:10.5px;height:7.2px;"></div>
<svg style="left:320.2px;top:753.4px" width="4.4" height="2.6"><path d="M0 2.6L2.2 0L4.4 2.6z" fill="#5e5e5e"/></svg>
<svg style="left:320.2px;top:760.8px" width="4.4" height="2.6"><path d="M0 0L2.2 2.6L4.4 0z" fill="#5e5e5e"/></svg>
<div class="inp" style="left:331.4px;top:749.4px;width:51.4px;height:17.8px;background:#fff;"></div>
<div class="t" style="left:334.9px;top:752.9px;font-size:11px;color:#101010;transform:scaleX(0.900);transform-origin:0 0;">0.5</div>
<div class="sp" style="left:370.8px;top:750.9px;width:10.5px;height:7.2px;"></div>
<div class="sp" style="left:370.8px;top:758.5px;width:10.5px;height:7.2px;"></div>
<svg style="left:373.9px;top:753.4px" width="4.4" height="2.6"><path d="M0 2.6L2.2 0L4.4 2.6z" fill="#5e5e5e"/></svg>
<svg style="left:373.9px;top:760.8px" width="4.4" height="2.6"><path d="M0 0L2.2 2.6L4.4 0z" fill="#5e5e5e"/></svg>
<div class="t" style="left:384.6px;top:753.0px;font-size:11.4px;color:#dcdcdc;transform:scaleX(0.735);transform-origin:0 0;">R_LED</div>
<div class="t" style="left:519.0px;top:586.0px;font-size:17px;color:#ececec;transform:scaleX(0.924);transform-origin:0 0;">Laser ON</div>
<div class="b" style="left:590.0px;top:590.0px;width:9.2px;height:9.2px;background:linear-gradient(135deg,#d4d4d4,#fcfcfc);border:1px solid #9c9c9c;"></div>
<div class="t" style="left:454.8px;top:620.8px;font-size:11.4px;color:#dcdcdc;transform:scaleX(0.876);transform-origin:0 0;">Exposure</div>
<div class="t" style="left:517.3px;top:620.8px;font-size:11.4px;color:#dcdcdc;transform:scaleX(0.866);transform-origin:0 0;">Gamma</div>
<div class="t" style="left:571.3px;top:620.8px;font-size:11.4px;color:#dcdcdc;transform:scaleX(0.843);transform-origin:0 0;">Gain</div>
<div class="t" style="left:622.0px;top:620.8px;font-size:11.4px;color:#dcdcdc;transform:scaleX(0.785);transform-origin:0 0;">LED</div>
<div class="inp" style="left:454.8px;top:635.2px;width:50.8px;height:18.0px;background:#fff;"></div>
<div class="t" style="left:458.3px;top:638.8px;font-size:11px;color:#101010;transform:scaleX(0.900);transform-origin:0 0;">1000</div>
<div class="sp" style="left:493.6px;top:636.7px;width:10.5px;height:7.3px;"></div>
<div class="sp" style="left:493.6px;top:644.4px;width:10.5px;height:7.3px;"></div>
<svg style="left:496.7px;top:639.2px" width="4.4" height="2.6"><path d="M0 2.6L2.2 0L4.4 2.6z" fill="#5e5e5e"/></svg>
<svg style="left:496.7px;top:646.8px" width="4.4" height="2.6"><path d="M0 0L2.2 2.6L4.4 0z" fill="#5e5e5e"/></svg>
<div class="inp" style="left:507.9px;top:635.2px;width:50.9px;height:18.0px;background:#fff;"></div>
<div class="t" style="left:511.4px;top:638.8px;font-size:11px;color:#101010;transform:scaleX(0.900);transform-origin:0 0;">1</div>
<div class="sp" style="left:546.8px;top:636.7px;width:10.5px;height:7.3px;"></div>
<div class="sp" style="left:546.8px;top:644.4px;width:10.5px;height:7.3px;"></div>
<svg style="left:549.8px;top:639.2px" width="4.4" height="2.6"><path d="M0 2.6L2.2 0L4.4 2.6z" fill="#5e5e5e"/></svg>
<svg style="left:549.8px;top:646.8px" width="4.4" height="2.6"><path d="M0 0L2.2 2.6L4.4 0z" fill="#5e5e5e"/></svg>
<div class="inp" style="left:561.9px;top:635.2px;width:50.9px;height:18.0px;background:#fff;"></div>
<div class="t" style="left:565.4px;top:638.8px;font-size:11px;color:#101010;transform:scaleX(0.900);transform-origin:0 0;">1</div>
<div class="sp" style="left:600.8px;top:636.7px;width:10.5px;height:7.3px;"></div>
<div class="sp" style="left:600.8px;top:644.4px;width:10.5px;height:7.3px;"></div>
<svg style="left:603.8px;top:639.2px" width="4.4" height="2.6"><path d="M0 2.6L2.2 0L4.4 2.6z" fill="#5e5e5e"/></svg>
<svg style="left:603.8px;top:646.8px" width="4.4" height="2.6"><path d="M0 0L2.2 2.6L4.4 0z" fill="#5e5e5e"/></svg>
<div class="inp" style="left:613.2px;top:635.2px;width:50.6px;height:18.0px;background:#fff;"></div>
<div class="t" style="left:616.7px;top:638.8px;font-size:11px;color:#101010;transform:scaleX(0.900);transform-origin:0 0;">0</div>
<div class="sp" style="left:651.8px;top:636.7px;width:10.5px;height:7.3px;"></div>
<div class="sp" style="left:651.8px;top:644.4px;width:10.5px;height:7.3px;"></div>
<svg style="left:654.8px;top:639.2px" width="4.4" height="2.6"><path d="M0 2.6L2.2 0L4.4 2.6z" fill="#5e5e5e"/></svg>
<svg style="left:654.8px;top:646.8px" width="4.4" height="2.6"><path d="M0 0L2.2 2.6L4.4 0z" fill="#5e5e5e"/></svg>
<div class="t" style="left:454.8px;top:666.8px;font-size:11.4px;color:#dcdcdc;transform:scaleX(0.876);transform-origin:0 0;">Exposure</div>
<div class="t" style="left:516.6px;top:666.8px;font-size:11.4px;color:#dcdcdc;transform:scaleX(0.863);transform-origin:0 0;">Gamma</div>
<div class="t" style="left:570.4px;top:666.8px;font-size:11.4px;color:#dcdcdc;transform:scaleX(0.847);transform-origin:0 0;">Gain</div>
<div class="t" style="left:621.4px;top:666.8px;font-size:11.4px;color:#dcdcdc;transform:scaleX(0.785);transform-origin:0 0;">LED</div>
<div class="inp" style="left:454.2px;top:681.4px;width:50.8px;height:18.0px;background:#fff;"></div>
<div class="t" style="left:457.7px;top:685.0px;font-size:11px;color:#101010;transform:scaleX(0.900);transform-origin:0 0;">1000</div>
<div class="sp" style="left:493.0px;top:682.9px;width:10.5px;height:7.3px;"></div>
<div class="sp" style="left:493.0px;top:690.6px;width:10.5px;height:7.3px;"></div>
<svg style="left:496.1px;top:685.4px" width="4.4" height="2.6"><path d="M0 2.6L2.2 0L4.4 2.6z" fill="#5e5e5e"/></svg>
<svg style="left:496.1px;top:692.9px" width="4.4" height="2.6"><path d="M0 0L2.2 2.6L4.4 0z" fill="#5e5e5e"/></svg>
<div class="inp" style="left:507.3px;top:681.4px;width:50.9px;height:18.0px;background:#fff;"></div>
<div class="t" style="left:510.8px;top:685.0px;font-size:11px;color:#101010;transform:scaleX(0.900);transform-origin:0 0;">1</div>
<div class="sp" style="left:546.2px;top:682.9px;width:10.5px;height:7.3px;"></div>
<div class="sp" style="left:546.2px;top:690.6px;width:10.5px;height:7.3px;"></div>
<svg style="left:549.2px;top:685.4px" width="4.4" height="2.6"><path d="M0 2.6L2.2 0L4.4 2.6z" fill="#5e5e5e"/></svg>
<svg style="left:549.2px;top:692.9px" width="4.4" height="2.6"><path d="M0 0L2.2 2.6L4.4 0z" fill="#5e5e5e"/></svg>
<div class="inp" style="left:561.0px;top:681.4px;width:51.2px;height:18.0px;background:#fff;"></div>
<div class="t" style="left:564.5px;top:685.0px;font-size:11px;color:#101010;transform:scaleX(0.900);transform-origin:0 0;">1</div>
<div class="sp" style="left:600.2px;top:682.9px;width:10.5px;height:7.3px;"></div>
<div class="sp" style="left:600.2px;top:690.6px;width:10.5px;height:7.3px;"></div>
<svg style="left:603.2px;top:685.4px" width="4.4" height="2.6"><path d="M0 2.6L2.2 0L4.4 2.6z" fill="#5e5e5e"/></svg>
<svg style="left:603.2px;top:692.9px" width="4.4" height="2.6"><path d="M0 0L2.2 2.6L4.4 0z" fill="#5e5e5e"/></svg>
<div class="inp" style="left:612.6px;top:681.4px;width:50.6px;height:18.0px;background:#fff;"></div>
<div class="t" style="left:616.1px;top:685.0px;font-size:11px;color:#101010;transform:scaleX(0.900);transform-origin:0 0;">0</div>
<div class="sp" style="left:651.2px;top:682.9px;width:10.5px;height:7.3px;"></div>
<div class="sp" style="left:651.2px;top:690.6px;width:10.5px;height:7.3px;"></div>
<svg style="left:654.2px;top:685.4px" width="4.4" height="2.6"><path d="M0 2.6L2.2 0L4.4 2.6z" fill="#5e5e5e"/></svg>
<svg style="left:654.2px;top:692.9px" width="4.4" height="2.6"><path d="M0 0L2.2 2.6L4.4 0z" fill="#5e5e5e"/></svg>
<div class="t" style="left:690.8px;top:588.5px;font-size:17px;color:#ececec;">Symmetry</div>
<div class="t" style="left:680.5px;top:627.8px;font-size:11px;color:#dcdcdc;transform:scaleX(0.848);transform-origin:0 0;">TOP_Hori</div>
<div class="t" style="left:733.0px;top:627.8px;font-size:11px;color:#dcdcdc;transform:scaleX(0.859);transform-origin:0 0;">TOP_Verti</div>
<div class="b" style="left:696.6px;top:642.4px;width:9.2px;height:9.2px;background:linear-gradient(135deg,#d4d4d4,#fcfcfc);border:1px solid #9c9c9c;"></div>
<div class="b" style="left:750.6px;top:642.4px;width:9.2px;height:9.2px;background:linear-gradient(135deg,#d4d4d4,#fcfcfc);border:1px solid #9c9c9c;"></div>
<div class="t" style="left:680.5px;top:679.5px;font-size:11px;color:#dcdcdc;transform:scaleX(0.864);transform-origin:0 0;">SIDE_Hori</div>
<div class="t" style="left:734.4px;top:679.5px;font-size:11px;color:#dcdcdc;transform:scaleX(0.848);transform-origin:0 0;">SIDE_Verti</div>
<div class="b" style="left:696.6px;top:693.4px;width:9.2px;height:9.2px;background:linear-gradient(135deg,#d4d4d4,#fcfcfc);border:1px solid #9c9c9c;"></div>
<div class="b" style="left:750.6px;top:693.4px;width:9.2px;height:9.2px;background:linear-gradient(135deg,#d4d4d4,#fcfcfc);border:1px solid #9c9c9c;"></div>
<svg style="left:752.0px;top:694.6px" width="7" height="7"><path d="M0.8 3.4L2.8 5.6L6.2 0.8" fill="none" stroke="#1a1a1a" stroke-width="1.4"/></svg>
<div class="t" style="left:680.5px;top:723.1px;font-size:11px;color:#dcdcdc;transform:scaleX(0.891);transform-origin:0 0;">PM_Hori</div>
<div class="t" style="left:734.4px;top:723.1px;font-size:11px;color:#dcdcdc;transform:scaleX(0.896);transform-origin:0 0;">PM_Verti</div>
<div class="b" style="left:696.6px;top:738.2px;width:9.2px;height:9.2px;background:linear-gradient(135deg,#d4d4d4,#fcfcfc);border:1px solid #9c9c9c;"></div>
<div class="b" style="left:750.6px;top:738.2px;width:9.2px;height:9.2px;background:linear-gradient(135deg,#d4d4d4,#fcfcfc);border:1px solid #9c9c9c;"></div>
<svg style="left:752.0px;top:739.4px" width="7" height="7"><path d="M0.8 3.4L2.8 5.6L6.2 0.8" fill="none" stroke="#1a1a1a" stroke-width="1.4"/></svg>
<div class="t" style="left:865.0px;top:593.7px;font-size:17px;color:#ececec;transform:scaleX(0.944);transform-origin:0 0;">TOP/SIDE Calibration</div>
<div class="t" style="left:860.0px;top:639.5px;font-size:11.4px;color:#dcdcdc;transform:scaleX(0.849);transform-origin:0 0;">FiberDia_um</div>
<div class="inp" style="left:859.2px;top:654.4px;width:53.8px;height:17.4px;background:#fff;"></div>
<div class="t" style="left:862.7px;top:657.7px;font-size:11px;color:#101010;transform:scaleX(0.900);transform-origin:0 0;">400</div>
<div class="sp" style="left:901.0px;top:655.9px;width:10.5px;height:7.0px;"></div>
<div class="sp" style="left:901.0px;top:663.3px;width:10.5px;height:7.0px;"></div>
<svg style="left:904.0px;top:658.3px" width="4.4" height="2.6"><path d="M0 2.6L2.2 0L4.4 2.6z" fill="#5e5e5e"/></svg>
<svg style="left:904.0px;top:665.5px" width="4.4" height="2.6"><path d="M0 0L2.2 2.6L4.4 0z" fill="#5e5e5e"/></svg>
<div class="t" style="left:922.6px;top:628.1px;font-size:11.4px;color:#dcdcdc;transform:scaleX(0.820);transform-origin:0 0;">TOP_pix</div>
<div class="b" style="left:922.0px;top:641.2px;width:50.4px;height:17.6px;background:#f1f1f1;border:1px solid #dcdcdc;"></div>
<div class="t" style="left:926.6px;top:645.1px;font-size:11px;color:#101010;transform:scaleX(0.930);transform-origin:0 0;">0</div>
<div class="t" style="left:980.2px;top:628.1px;font-size:11.4px;color:#dcdcdc;transform:scaleX(0.852);transform-origin:0 0;">TOP_um/p</div>
<div class="b" style="left:979.2px;top:641.2px;width:49.8px;height:17.6px;background:#f1f1f1;border:1px solid #dcdcdc;"></div>
<div class="t" style="left:983.8px;top:645.1px;font-size:11px;color:#101010;transform:scaleX(0.930);transform-origin:0 0;">1.114</div>
<div class="t" style="left:922.6px;top:666.0px;font-size:11.4px;color:#dcdcdc;transform:scaleX(0.816);transform-origin:0 0;">SIDE_pix</div>
<div class="b" style="left:922.0px;top:680.0px;width:50.4px;height:17.8px;background:#f1f1f1;border:1px solid #dcdcdc;"></div>
<div class="t" style="left:926.6px;top:684.0px;font-size:11px;color:#101010;transform:scaleX(0.930);transform-origin:0 0;">0</div>
<div class="t" style="left:980.8px;top:666.0px;font-size:11.4px;color:#dcdcdc;transform:scaleX(0.837);transform-origin:0 0;">SIDE_um/p</div>
<div class="b" style="left:979.8px;top:680.0px;width:49.8px;height:17.8px;background:#f1f1f1;border:1px solid #dcdcdc;"></div>
<div class="t" style="left:984.4px;top:684.0px;font-size:11px;color:#101010;transform:scaleX(0.930);transform-origin:0 0;">1.127</div>
<div class="gb" style="left:886.6px;top:717.0px;width:114.4px;height:34.6px;background:linear-gradient(#d4d4d4 0,#c2c2c2 44%,#8a8a8a 52%,#9c9c9c 80%,#aaa 100%);"></div>
<div class="t" style="left:895.0px;top:726.5px;font-size:16.4px;color:#0e0e0e;transform:scaleX(0.904);transform-origin:0 0;">TOP/SIDE Cali</div>
<div class="b" style="left:1062.2px;top:601.0px;width:9.2px;height:9.2px;background:linear-gradient(135deg,#d4d4d4,#fcfcfc);border:1px solid #9c9c9c;"></div>
<div class="t" style="left:1073.8px;top:601.2px;font-size:10.4px;color:#dcdcdc;transform:scaleX(0.941);transform-origin:0 0;">Find circle</div>
<div class="t" style="left:1061.9px;top:626.8px;font-size:11.4px;color:#dcdcdc;transform:scaleX(0.844);transform-origin:0 0;">PM_pix</div>
<div class="b" style="left:1061.3px;top:639.8px;width:50.3px;height:18.2px;background:#f1f1f1;border:1px solid #dcdcdc;"></div>
<div class="t" style="left:1065.9px;top:644.0px;font-size:11px;color:#101010;transform:scaleX(0.930);transform-origin:0 0;">0</div>
<div class="t" style="left:1119.7px;top:626.8px;font-size:11.4px;color:#dcdcdc;transform:scaleX(0.875);transform-origin:0 0;">PM_um/p</div>
<div class="b" style="left:1118.8px;top:639.8px;width:50.4px;height:18.2px;background:#f1f1f1;border:1px solid #dcdcdc;"></div>
<div class="t" style="left:1123.4px;top:644.0px;font-size:11px;color:#101010;transform:scaleX(0.930);transform-origin:0 0;">0.327</div>
<div class="t" style="left:1061.0px;top:674.8px;font-size:9.8px;color:#dedede;font-family:'Liberation Sans','Noto Sans CJK SC',sans-serif;">旋转角度</div>
<div class="b" style="left:1061.3px;top:688.4px;width:61.5px;height:16.4px;background:#c3c3c3;border:1px solid #fff;border-top-color:#6a6a6a;border-left-color:#6a6a6a;"></div>
<div class="b" style="left:1067.4px;top:689.4px;width:1.0px;height:14.4px;background:#6a6a6a;"></div>
<svg style="left:1062.4px;top:690px" width="5" height="14"><path d="M0.3 5L2.5 0.6L4.7 5zM0.3 8.6L2.5 13L4.7 8.6z" fill="#111"/></svg>
<div class="t" style="left:1070.4px;top:691.5px;font-size:10.8px;color:#141414;transform:scaleX(0.896);transform-origin:0 0;">180.00</div>
<div class="gb" style="left:1072.6px;top:717.0px;width:79.4px;height:34.6px;background:linear-gradient(#d4d4d4 0,#c2c2c2 44%,#8a8a8a 52%,#9c9c9c 80%,#aaa 100%);"></div>
<div class="t" style="left:1085.6px;top:726.5px;font-size:16.4px;color:#0e0e0e;transform:scaleX(0.958);transform-origin:0 0;">PM Cali</div>
<div class="gb" style="left:1236.6px;top:713.4px;width:87.0px;height:42.0px;background:linear-gradient(#d4d4d4 0,#c2c2c2 44%,#8a8a8a 52%,#9c9c9c 80%,#aaa 100%);"></div>
<div class="t" style="left:1259.2px;top:724.2px;font-size:18px;color:#0e0e0e;">Apply</div>
</body></html>
